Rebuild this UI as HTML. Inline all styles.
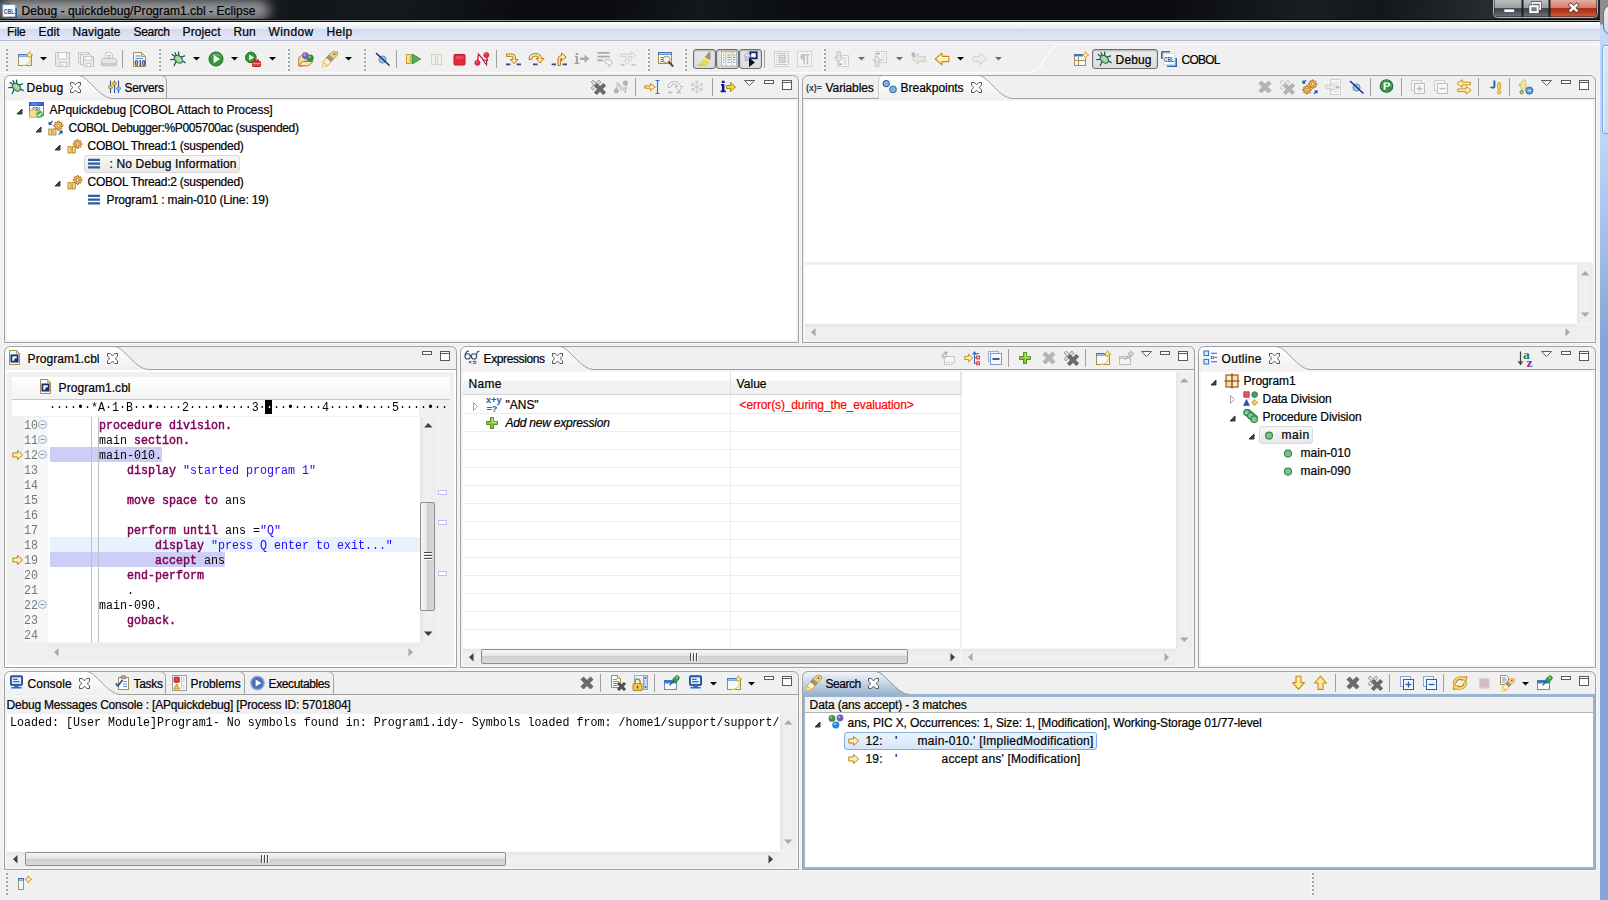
<!DOCTYPE html>
<html lang="en"><head><meta charset="utf-8"><title>Debug - quickdebug/Program1.cbl - Eclipse</title>
<style>
html,body{margin:0;padding:0;background:#f0f0f0;}
#root{position:relative;width:1608px;height:900px;overflow:hidden;background:#f0f0f0;font-family:"Liberation Sans",sans-serif;font-size:12px;color:#000;}
#root div,#root svg,#root span.t{position:absolute;}
#root svg{overflow:visible;}
span.t{white-space:pre;line-height:16px;height:16px;}
span.u{font-family:"Liberation Sans",sans-serif;font-size:12px;-webkit-text-stroke:.2px currentColor;}
span.m{font-family:"Liberation Mono",monospace;font-size:11.667px;transform:scaleY(1.1);transform-origin:0 11px;}
span.k{color:#7f0055;-webkit-text-stroke:.45px #7f0055;}
span.s{color:#2a00ff;}
span.ln{color:#787878;}

</style></head>
<body>
<div id="root">
<div style="left:0px;top:0px;width:1600px;height:22px;background:linear-gradient(100deg,#2c2f33 0px,#121519 300px,#161a1f 380px,#0b0d11 500px,#0a0c10 600px,#14171c 690px,#0a0c10 800px,#0a0c10 1150px,#1a1d21 1290px,#13161a 1360px,#2a2e32 1480px,#1e2125 1600px);"></div>
<div style="left:0px;top:0px;width:270px;height:20px;background:rgba(255,255,255,.55);border-radius:10px;filter:blur(6px);"></div>
<div style="left:0px;top:19px;width:1600px;height:1px;background:#0c1014;"></div>
<div style="left:0px;top:20px;width:1600px;height:1px;background:#9a9e9e;"></div>
<div style="left:0px;top:21px;width:1600px;height:1px;background:#0c1014;"></div>
<div style="left:0px;top:22px;width:1600px;height:7px;background:linear-gradient(180deg,#ffffff,#e5e9f5);"></div>
<div style="left:0px;top:29px;width:1600px;height:11px;background:linear-gradient(180deg,#d4d9ed,#e3e8f8);"></div>
<div style="left:0px;top:40px;width:1600px;height:1px;background:#b6bbd0;"></div>
<div style="left:0px;top:41px;width:1600px;height:1px;background:#f2f2f2;"></div>
<div style="left:1600px;top:0px;width:8px;height:900px;background:linear-gradient(180deg,#8c8c8c 0px,#8c8c8c 24px,#c2d9f8 25px,#bcd6f7 140px,#a6c2ea 230px,#84a5d5 340px,#84a5d5 900px);"></div>
<div style="left:1603px;top:5px;width:16px;height:30px;background:linear-gradient(180deg,#e9edf5,#cfd8ea);border:1px solid #70747c;border-radius:8px;box-sizing:border-box;"></div>
<div style="left:1602px;top:45px;width:12px;height:89px;background:linear-gradient(180deg,#d9e8fb,#c9dcf6);border:1px solid #7fa6d8;border-radius:3px;box-sizing:border-box;box-shadow:inset 1px 1px 0 #f4f9ff;"></div>
<div style="left:1599px;top:42px;width:1px;height:858px;background:#f5f4ef;"></div>
<svg style="left:1493px;top:0px" width="105" height="19" viewBox="0 0 105 19" >
<defs>
<linearGradient id="cbg" x1="0" y1="0" x2="0" y2="1"><stop offset="0" stop-color="#bcbec0"/><stop offset=".48" stop-color="#9c9ea1"/><stop offset=".52" stop-color="#3c4046"/><stop offset="1" stop-color="#6d7177"/></linearGradient>
<linearGradient id="cbr" x1="0" y1="0" x2="0" y2="1"><stop offset="0" stop-color="#e6b0a2"/><stop offset=".48" stop-color="#d27c68"/><stop offset=".52" stop-color="#a82c14"/><stop offset="1" stop-color="#cc5a38"/></linearGradient>
</defs>
<path d="M0.5,-1 V13.5 Q0.5,17.5 4.5,17.5 H100.5 Q104.5,17.5 104.5,13.5 V-1 Z" fill="#1c1f24" stroke="#b0b2b4" stroke-width="1"/>
<path d="M1.5,0 H28.5 V16.5 H4.5 Q1.5,16.5 1.5,13.5 Z" fill="url(#cbg)"/>
<path d="M30.5,0 H55.5 V16.5 H30.5 Z" fill="url(#cbg)"/>
<path d="M57.5,0 H103.5 V13.5 Q103.5,16.5 100.5,16.5 H57.5 Z" fill="url(#cbr)"/>
<rect x="11" y="9" width="10.5" height="3.4" fill="#fff" stroke="#3c4050" stroke-width=".7"/>
<path d="M39.5,5 V2.8 H47.2 V9 H45.5" fill="none" stroke="#3c4050" stroke-width="3"/>
<path d="M39.5,5 V2.8 H47.2 V9 H45.5" fill="none" stroke="#fff" stroke-width="1.8"/>
<rect x="37.3" y="6.2" width="7.4" height="6" fill="none" stroke="#3c4050" stroke-width="3.2"/>
<rect x="37.3" y="6.2" width="7.4" height="6" fill="#7a7d84" stroke="#fff" stroke-width="2"/>
<path d="M77.6,5 L83.6,10.6 M83.6,5 L77.6,10.6" stroke="#4a2a2a" stroke-width="3.8" stroke-linecap="square"/>
<path d="M77.6,5 L83.6,10.6 M83.6,5 L77.6,10.6" stroke="#fff" stroke-width="2.5" stroke-linecap="square"/>
</svg>
<svg style="left:5px;top:48px" width="3" height="24" viewBox="0 0 3 24" ><rect x="0" y="0" width="2" height="2" fill="#fbfbfb"/><rect x="1" y="1" width="2" height="2" fill="#a6a6a6"/><rect x="0" y="4" width="2" height="2" fill="#fbfbfb"/><rect x="1" y="5" width="2" height="2" fill="#a6a6a6"/><rect x="0" y="8" width="2" height="2" fill="#fbfbfb"/><rect x="1" y="9" width="2" height="2" fill="#a6a6a6"/><rect x="0" y="12" width="2" height="2" fill="#fbfbfb"/><rect x="1" y="13" width="2" height="2" fill="#a6a6a6"/><rect x="0" y="16" width="2" height="2" fill="#fbfbfb"/><rect x="1" y="17" width="2" height="2" fill="#a6a6a6"/><rect x="0" y="20" width="2" height="2" fill="#fbfbfb"/><rect x="1" y="21" width="2" height="2" fill="#a6a6a6"/></svg>
<svg style="left:158px;top:48px" width="3" height="24" viewBox="0 0 3 24" ><rect x="0" y="0" width="2" height="2" fill="#fbfbfb"/><rect x="1" y="1" width="2" height="2" fill="#a6a6a6"/><rect x="0" y="4" width="2" height="2" fill="#fbfbfb"/><rect x="1" y="5" width="2" height="2" fill="#a6a6a6"/><rect x="0" y="8" width="2" height="2" fill="#fbfbfb"/><rect x="1" y="9" width="2" height="2" fill="#a6a6a6"/><rect x="0" y="12" width="2" height="2" fill="#fbfbfb"/><rect x="1" y="13" width="2" height="2" fill="#a6a6a6"/><rect x="0" y="16" width="2" height="2" fill="#fbfbfb"/><rect x="1" y="17" width="2" height="2" fill="#a6a6a6"/><rect x="0" y="20" width="2" height="2" fill="#fbfbfb"/><rect x="1" y="21" width="2" height="2" fill="#a6a6a6"/></svg>
<svg style="left:287px;top:48px" width="3" height="24" viewBox="0 0 3 24" ><rect x="0" y="0" width="2" height="2" fill="#fbfbfb"/><rect x="1" y="1" width="2" height="2" fill="#a6a6a6"/><rect x="0" y="4" width="2" height="2" fill="#fbfbfb"/><rect x="1" y="5" width="2" height="2" fill="#a6a6a6"/><rect x="0" y="8" width="2" height="2" fill="#fbfbfb"/><rect x="1" y="9" width="2" height="2" fill="#a6a6a6"/><rect x="0" y="12" width="2" height="2" fill="#fbfbfb"/><rect x="1" y="13" width="2" height="2" fill="#a6a6a6"/><rect x="0" y="16" width="2" height="2" fill="#fbfbfb"/><rect x="1" y="17" width="2" height="2" fill="#a6a6a6"/><rect x="0" y="20" width="2" height="2" fill="#fbfbfb"/><rect x="1" y="21" width="2" height="2" fill="#a6a6a6"/></svg>
<svg style="left:363px;top:48px" width="3" height="24" viewBox="0 0 3 24" ><rect x="0" y="0" width="2" height="2" fill="#fbfbfb"/><rect x="1" y="1" width="2" height="2" fill="#a6a6a6"/><rect x="0" y="4" width="2" height="2" fill="#fbfbfb"/><rect x="1" y="5" width="2" height="2" fill="#a6a6a6"/><rect x="0" y="8" width="2" height="2" fill="#fbfbfb"/><rect x="1" y="9" width="2" height="2" fill="#a6a6a6"/><rect x="0" y="12" width="2" height="2" fill="#fbfbfb"/><rect x="1" y="13" width="2" height="2" fill="#a6a6a6"/><rect x="0" y="16" width="2" height="2" fill="#fbfbfb"/><rect x="1" y="17" width="2" height="2" fill="#a6a6a6"/><rect x="0" y="20" width="2" height="2" fill="#fbfbfb"/><rect x="1" y="21" width="2" height="2" fill="#a6a6a6"/></svg>
<svg style="left:647px;top:48px" width="3" height="24" viewBox="0 0 3 24" ><rect x="0" y="0" width="2" height="2" fill="#fbfbfb"/><rect x="1" y="1" width="2" height="2" fill="#a6a6a6"/><rect x="0" y="4" width="2" height="2" fill="#fbfbfb"/><rect x="1" y="5" width="2" height="2" fill="#a6a6a6"/><rect x="0" y="8" width="2" height="2" fill="#fbfbfb"/><rect x="1" y="9" width="2" height="2" fill="#a6a6a6"/><rect x="0" y="12" width="2" height="2" fill="#fbfbfb"/><rect x="1" y="13" width="2" height="2" fill="#a6a6a6"/><rect x="0" y="16" width="2" height="2" fill="#fbfbfb"/><rect x="1" y="17" width="2" height="2" fill="#a6a6a6"/><rect x="0" y="20" width="2" height="2" fill="#fbfbfb"/><rect x="1" y="21" width="2" height="2" fill="#a6a6a6"/></svg>
<svg style="left:684px;top:48px" width="3" height="24" viewBox="0 0 3 24" ><rect x="0" y="0" width="2" height="2" fill="#fbfbfb"/><rect x="1" y="1" width="2" height="2" fill="#a6a6a6"/><rect x="0" y="4" width="2" height="2" fill="#fbfbfb"/><rect x="1" y="5" width="2" height="2" fill="#a6a6a6"/><rect x="0" y="8" width="2" height="2" fill="#fbfbfb"/><rect x="1" y="9" width="2" height="2" fill="#a6a6a6"/><rect x="0" y="12" width="2" height="2" fill="#fbfbfb"/><rect x="1" y="13" width="2" height="2" fill="#a6a6a6"/><rect x="0" y="16" width="2" height="2" fill="#fbfbfb"/><rect x="1" y="17" width="2" height="2" fill="#a6a6a6"/><rect x="0" y="20" width="2" height="2" fill="#fbfbfb"/><rect x="1" y="21" width="2" height="2" fill="#a6a6a6"/></svg>
<svg style="left:823px;top:48px" width="3" height="24" viewBox="0 0 3 24" ><rect x="0" y="0" width="2" height="2" fill="#fbfbfb"/><rect x="1" y="1" width="2" height="2" fill="#a6a6a6"/><rect x="0" y="4" width="2" height="2" fill="#fbfbfb"/><rect x="1" y="5" width="2" height="2" fill="#a6a6a6"/><rect x="0" y="8" width="2" height="2" fill="#fbfbfb"/><rect x="1" y="9" width="2" height="2" fill="#a6a6a6"/><rect x="0" y="12" width="2" height="2" fill="#fbfbfb"/><rect x="1" y="13" width="2" height="2" fill="#a6a6a6"/><rect x="0" y="16" width="2" height="2" fill="#fbfbfb"/><rect x="1" y="17" width="2" height="2" fill="#a6a6a6"/><rect x="0" y="20" width="2" height="2" fill="#fbfbfb"/><rect x="1" y="21" width="2" height="2" fill="#a6a6a6"/></svg>
<div style="left:122px;top:50px;width:1px;height:18px;background:#a0a0a0;"></div>
<div style="left:396px;top:50px;width:1px;height:18px;background:#a0a0a0;"></div>
<div style="left:496px;top:50px;width:1px;height:18px;background:#a0a0a0;"></div>
<div style="left:764px;top:50px;width:1px;height:18px;background:#a0a0a0;"></div>
<svg style="left:40px;top:57px" width="7" height="4" viewBox="0 0 7 4" ><path d="M0,0 H7 L3.5,3.5 Z" fill="#000"/></svg>
<svg style="left:193px;top:57px" width="7" height="4" viewBox="0 0 7 4" ><path d="M0,0 H7 L3.5,3.5 Z" fill="#000"/></svg>
<svg style="left:231px;top:57px" width="7" height="4" viewBox="0 0 7 4" ><path d="M0,0 H7 L3.5,3.5 Z" fill="#000"/></svg>
<svg style="left:269px;top:57px" width="7" height="4" viewBox="0 0 7 4" ><path d="M0,0 H7 L3.5,3.5 Z" fill="#000"/></svg>
<svg style="left:345px;top:57px" width="7" height="4" viewBox="0 0 7 4" ><path d="M0,0 H7 L3.5,3.5 Z" fill="#000"/></svg>
<svg style="left:858px;top:57px" width="7" height="4" viewBox="0 0 7 4" ><path d="M0,0 H7 L3.5,3.5 Z" fill="#6e6e6e"/></svg>
<svg style="left:896px;top:57px" width="7" height="4" viewBox="0 0 7 4" ><path d="M0,0 H7 L3.5,3.5 Z" fill="#6e6e6e"/></svg>
<svg style="left:995px;top:57px" width="7" height="4" viewBox="0 0 7 4" ><path d="M0,0 H7 L3.5,3.5 Z" fill="#6e6e6e"/></svg>
<svg style="left:957px;top:57px" width="7" height="4" viewBox="0 0 7 4" ><path d="M0,0 H7 L3.5,3.5 Z" fill="#000"/></svg>
<div style="left:693px;top:49px;width:23px;height:20px;background:linear-gradient(180deg,#e9e9e9,#dcdcdc);border:1px solid #6e6e6e;border-radius:3px;box-sizing:border-box;box-shadow:inset 0 1px 2px rgba(0,0,0,.25);"></div>
<div style="left:716px;top:49px;width:23px;height:20px;background:linear-gradient(180deg,#e9e9e9,#dcdcdc);border:1px solid #6e6e6e;border-radius:3px;box-sizing:border-box;box-shadow:inset 0 1px 2px rgba(0,0,0,.25);"></div>
<div style="left:739px;top:49px;width:23px;height:20px;background:linear-gradient(180deg,#e9e9e9,#dcdcdc);border:1px solid #6e6e6e;border-radius:3px;box-sizing:border-box;box-shadow:inset 0 1px 2px rgba(0,0,0,.25);"></div>
<svg style="left:0px;top:42px" width="1600" height="32" viewBox="0 0 1600 32" ><path d="M0,30.5 H1028 C1046,30.5 1045,2.5 1063,2.5 H1600" fill="none" stroke="#ffffff" stroke-width="1.1"/></svg>
<div style="left:1092px;top:49px;width:66px;height:20px;background:linear-gradient(180deg,#ececec,#dedede);border:1px solid #6e6e6e;border-radius:3px;box-sizing:border-box;box-shadow:inset 0 1px 2px rgba(0,0,0,.25);"></div>
<svg style="left:4px;top:75px" width="795" height="268" viewBox="0 0 795 268" ><defs><linearGradient id="g4_75" x1="0" y1="0" x2="0" y2="1"><stop offset="0" stop-color="#ffffff"/><stop offset="1" stop-color="#f0f0f0"/></linearGradient></defs><path d="M0.5,267.5 V6.5 Q0.5,0.5 6.5,0.5 H788.5 Q794.5,0.5 794.5,6.5 V267.5 Z" fill="none" stroke="#f7f7f7" stroke-width="3"/><path d="M0.5,267.5 V6.5 Q0.5,0.5 6.5,0.5 H788.5 Q794.5,0.5 794.5,6.5 V267.5 Z" fill="#f0f0f0" stroke="none"/><rect x="1" y="24" width="793" height="243" fill="#f4f4f4"/><path d="M0.5,23.5 V6.5 Q0.5,0.5 6.5,0.5 H75 C83.2,0.5 96.1,23.5 108,23.5 Z" fill="url(#g4_75)" stroke="none"/><path d="M75,0.5 C83.2,0.5 96.1,23.5 108,23.5 H794.5" fill="none" stroke="#a0a0a0" stroke-width="1"/><path d="M156.5,0.5 Q162.5,0.5 162.5,6.5 V23" fill="none" stroke="#a0a0a0" stroke-width="1"/><path d="M0.5,267.5 V6.5 Q0.5,0.5 6.5,0.5 H788.5 Q794.5,0.5 794.5,6.5 V267.5 Z" fill="none" stroke="#a0a0a0" stroke-width="1"/></svg>
<div style="left:7px;top:101px;width:789px;height:239px;background:#ffffff;"></div>
<svg style="left:70px;top:82px" width="11" height="11" viewBox="0 0 11 11" ><path d="M0.5,0.5 H3.2 L5.5,2.9 L7.8,0.5 H10.5 V3.2 L8.1,5.5 L10.5,7.8 V10.5 H7.8 L5.5,8.1 L3.2,10.5 H0.5 V7.8 L2.9,5.5 L0.5,3.2 Z" fill="#fff" stroke="#555" stroke-width="1" stroke-linejoin="round"/></svg>
<div style="left:635px;top:78px;width:1px;height:18px;background:#a0a0a0;"></div>
<div style="left:712px;top:78px;width:1px;height:18px;background:#a0a0a0;"></div>
<svg style="left:744px;top:80px" width="12" height="8" viewBox="0 0 12 8" ><path d="M0.5,0.5 H10.5 L5.5,5.5 Z" fill="#fff" stroke="#5a5a5a" stroke-width="1"/></svg>
<svg style="left:764px;top:80px" width="10" height="5" viewBox="0 0 10 5" ><rect x="0.5" y="0.5" width="9" height="3" fill="#fff" stroke="#5a5a5a" stroke-width="1"/></svg>
<svg style="left:782px;top:80px" width="11" height="11" viewBox="0 0 11 11" ><rect x="0.5" y="0.5" width="9" height="9" fill="#fff" stroke="#5a5a5a" stroke-width="1"/><path d="M0.5,2.5 H9.5" stroke="#5a5a5a" stroke-width="1"/></svg>
<div style="left:84px;top:155px;width:156px;height:18px;background:linear-gradient(180deg,#f8f8f8,#e8e8e8);border:1px solid #d9d9d9;border-radius:3px;box-sizing:border-box;"></div>
<svg style="left:16px;top:108px" width="7" height="7" viewBox="0 0 7 7" ><path d="M6,1 V6 H1 Z" fill="#484848" stroke="#262626" stroke-width=".9" stroke-linejoin="round"/></svg>
<svg style="left:35px;top:126px" width="7" height="7" viewBox="0 0 7 7" ><path d="M6,1 V6 H1 Z" fill="#484848" stroke="#262626" stroke-width=".9" stroke-linejoin="round"/></svg>
<svg style="left:54px;top:144px" width="7" height="7" viewBox="0 0 7 7" ><path d="M6,1 V6 H1 Z" fill="#484848" stroke="#262626" stroke-width=".9" stroke-linejoin="round"/></svg>
<svg style="left:54px;top:180px" width="7" height="7" viewBox="0 0 7 7" ><path d="M6,1 V6 H1 Z" fill="#484848" stroke="#262626" stroke-width=".9" stroke-linejoin="round"/></svg>
<svg style="left:802px;top:75px" width="794" height="268" viewBox="0 0 794 268" ><defs><linearGradient id="g802_75" x1="0" y1="0" x2="0" y2="1"><stop offset="0" stop-color="#ffffff"/><stop offset="1" stop-color="#f0f0f0"/></linearGradient></defs><path d="M0.5,267.5 V6.5 Q0.5,0.5 6.5,0.5 H787.5 Q793.5,0.5 793.5,6.5 V267.5 Z" fill="none" stroke="#f7f7f7" stroke-width="3"/><path d="M0.5,267.5 V6.5 Q0.5,0.5 6.5,0.5 H787.5 Q793.5,0.5 793.5,6.5 V267.5 Z" fill="#f0f0f0" stroke="none"/><rect x="1" y="24" width="792" height="243" fill="#f4f4f4"/><path d="M0.5,23.5 H76.5 V6.5 Q76.5,0.5 82.5,0.5" fill="none" stroke="#a0a0a0" stroke-width="1"/><path d="M76.5,23.5 V6.5 Q76.5,0.5 82.5,0.5 H177 C185.2,0.5 198.1,23.5 210,23.5 Z" fill="url(#g802_75)" stroke="none"/><path d="M177,0.5 C185.2,0.5 198.1,23.5 210,23.5 H793.5" fill="none" stroke="#a0a0a0" stroke-width="1"/><path d="M0.5,267.5 V6.5 Q0.5,0.5 6.5,0.5 H787.5 Q793.5,0.5 793.5,6.5 V267.5 Z" fill="none" stroke="#a0a0a0" stroke-width="1"/></svg>
<div style="left:805px;top:101px;width:788px;height:239px;background:#ffffff;"></div>
<svg style="left:971px;top:82px" width="11" height="11" viewBox="0 0 11 11" ><path d="M0.5,0.5 H3.2 L5.5,2.9 L7.8,0.5 H10.5 V3.2 L8.1,5.5 L10.5,7.8 V10.5 H7.8 L5.5,8.1 L3.2,10.5 H0.5 V7.8 L2.9,5.5 L0.5,3.2 Z" fill="#fff" stroke="#555" stroke-width="1" stroke-linejoin="round"/></svg>
<div style="left:1370px;top:78px;width:1px;height:18px;background:#a0a0a0;"></div>
<div style="left:1401px;top:78px;width:1px;height:18px;background:#a0a0a0;"></div>
<div style="left:1478px;top:78px;width:1px;height:18px;background:#a0a0a0;"></div>
<div style="left:1509px;top:78px;width:1px;height:18px;background:#a0a0a0;"></div>
<svg style="left:1541px;top:80px" width="12" height="8" viewBox="0 0 12 8" ><path d="M0.5,0.5 H10.5 L5.5,5.5 Z" fill="#fff" stroke="#5a5a5a" stroke-width="1"/></svg>
<svg style="left:1561px;top:80px" width="10" height="5" viewBox="0 0 10 5" ><rect x="0.5" y="0.5" width="9" height="3" fill="#fff" stroke="#5a5a5a" stroke-width="1"/></svg>
<svg style="left:1579px;top:80px" width="11" height="11" viewBox="0 0 11 11" ><rect x="0.5" y="0.5" width="9" height="9" fill="#fff" stroke="#5a5a5a" stroke-width="1"/><path d="M0.5,2.5 H9.5" stroke="#5a5a5a" stroke-width="1"/></svg>
<div style="left:805px;top:262px;width:788px;height:3px;background:#f0f0f0;"></div>
<div style="left:1577px;top:265px;width:16px;height:58px;background:linear-gradient(90deg,#e6e6e6,#eeeeee 25%,#f0f0f0 60%,#ececec);"></div>
<svg style="left:1581px;top:271px" width="9" height="5" viewBox="0 0 9 5" ><path d="M0,4.5 H8.5 L4.25,0 Z" fill="#a8a8a8"/></svg>
<svg style="left:1581px;top:312px" width="9" height="5" viewBox="0 0 9 5" ><path d="M0,0.5 H8.5 L4.25,5 Z" fill="#a8a8a8"/></svg>
<div style="left:805px;top:324px;width:771px;height:16px;background:linear-gradient(180deg,#e6e6e6,#eeeeee 25%,#f0f0f0 60%,#ececec);"></div>
<svg style="left:811px;top:328px" width="5" height="9" viewBox="0 0 5 9" ><path d="M4.5,0 V8.5 L0,4.25 Z" fill="#a8a8a8"/></svg>
<svg style="left:1565px;top:328px" width="5" height="9" viewBox="0 0 5 9" ><path d="M0.5,0 V8.5 L5,4.25 Z" fill="#a8a8a8"/></svg>
<div style="left:805px;top:323px;width:788px;height:1px;background:#f6f6f6;"></div>
<div style="left:1576px;top:324px;width:17px;height:16px;background:#f0f0f0;"></div>
<svg style="left:4px;top:346px" width="453" height="322" viewBox="0 0 453 322" ><defs><linearGradient id="g4_346" x1="0" y1="0" x2="0" y2="1"><stop offset="0" stop-color="#ffffff"/><stop offset="1" stop-color="#f0f0f0"/></linearGradient></defs><path d="M0.5,321.5 V6.5 Q0.5,0.5 6.5,0.5 H446.5 Q452.5,0.5 452.5,6.5 V321.5 Z" fill="none" stroke="#f7f7f7" stroke-width="3"/><path d="M0.5,321.5 V6.5 Q0.5,0.5 6.5,0.5 H446.5 Q452.5,0.5 452.5,6.5 V321.5 Z" fill="#f0f0f0" stroke="none"/><rect x="1" y="24" width="451" height="297" fill="#ffffff"/><path d="M0.5,23.5 V6.5 Q0.5,0.5 6.5,0.5 H111 C119.2,0.5 132.1,23.5 144,23.5 Z" fill="url(#g4_346)" stroke="none"/><path d="M111,0.5 C119.2,0.5 132.1,23.5 144,23.5 H452.5" fill="none" stroke="#a0a0a0" stroke-width="1"/><path d="M0.5,321.5 V6.5 Q0.5,0.5 6.5,0.5 H446.5 Q452.5,0.5 452.5,6.5 V321.5 Z" fill="none" stroke="#a0a0a0" stroke-width="1"/></svg>
<div style="left:7px;top:372px;width:447px;height:293px;background:#f0f0f0;"></div>
<svg style="left:107px;top:353px" width="11" height="11" viewBox="0 0 11 11" ><path d="M0.5,0.5 H3.2 L5.5,2.9 L7.8,0.5 H10.5 V3.2 L8.1,5.5 L10.5,7.8 V10.5 H7.8 L5.5,8.1 L3.2,10.5 H0.5 V7.8 L2.9,5.5 L0.5,3.2 Z" fill="#fff" stroke="#555" stroke-width="1" stroke-linejoin="round"/></svg>
<svg style="left:422px;top:351px" width="10" height="5" viewBox="0 0 10 5" ><rect x="0.5" y="0.5" width="9" height="3" fill="#fff" stroke="#5a5a5a" stroke-width="1"/></svg>
<svg style="left:440px;top:351px" width="11" height="11" viewBox="0 0 11 11" ><rect x="0.5" y="0.5" width="9" height="9" fill="#fff" stroke="#5a5a5a" stroke-width="1"/><path d="M0.5,2.5 H9.5" stroke="#5a5a5a" stroke-width="1"/></svg>
<div style="left:12px;top:377px;width:438px;height:22px;background:linear-gradient(180deg,#ffffff,#f3f3f3);"></div>
<div style="left:12px;top:399px;width:438px;height:1px;background:#c8c8c8;"></div>
<div style="left:12px;top:400px;width:407px;height:16px;background:#ffffff;"></div>
<div style="left:265px;top:400px;width:7px;height:14px;background:#000;"></div>
<div style="left:24px;top:417px;width:24px;height:225px;background:#f7f7f7;"></div>
<div style="left:48px;top:417px;width:372px;height:225px;background:#ffffff;"></div>
<div style="left:50px;top:447px;width:112px;height:15px;background:#cecdf7;"></div>
<div style="left:50px;top:537px;width:370px;height:15px;background:#e8f2fe;"></div>
<div style="left:50px;top:552px;width:175px;height:15px;background:#cecdf7;"></div>
<div style="left:91px;top:417px;width:1px;height:225px;background:#c0c0c0;"></div>
<div style="left:98px;top:417px;width:1px;height:225px;background:#c0c0c0;"></div>
<svg style="left:38px;top:420px" width="9" height="9" viewBox="0 0 9 9" ><circle cx="4.5" cy="4.5" r="4" fill="#eef3f8" stroke="#9fb3c8" stroke-width="1"/><path d="M2.5,4.5 H6.5" stroke="#7f95ad" stroke-width="1"/></svg>
<svg style="left:38px;top:435px" width="9" height="9" viewBox="0 0 9 9" ><circle cx="4.5" cy="4.5" r="4" fill="#eef3f8" stroke="#9fb3c8" stroke-width="1"/><path d="M2.5,4.5 H6.5" stroke="#7f95ad" stroke-width="1"/></svg>
<svg style="left:12px;top:447px" width="16" height="16" viewBox="0 0 16 16"><path d="M0.8,6 H5.6 V3.4 L10.6,8 L5.6,12.6 V10 H0.8 Z" fill="#fdeeb4" stroke="#b98512" stroke-width="1" stroke-linejoin="round"/></svg>
<svg style="left:38px;top:450px" width="9" height="9" viewBox="0 0 9 9" ><circle cx="4.5" cy="4.5" r="4" fill="#eef3f8" stroke="#9fb3c8" stroke-width="1"/><path d="M2.5,4.5 H6.5" stroke="#7f95ad" stroke-width="1"/></svg>
<svg style="left:12px;top:552px" width="16" height="16" viewBox="0 0 16 16"><path d="M0.8,6 H5.6 V3.4 L10.6,8 L5.6,12.6 V10 H0.8 Z" fill="#fdeeb4" stroke="#b98512" stroke-width="1" stroke-linejoin="round"/></svg>
<svg style="left:38px;top:600px" width="9" height="9" viewBox="0 0 9 9" ><circle cx="4.5" cy="4.5" r="4" fill="#eef3f8" stroke="#9fb3c8" stroke-width="1"/><path d="M2.5,4.5 H6.5" stroke="#7f95ad" stroke-width="1"/></svg>
<div style="left:420px;top:417px;width:16px;height:225px;background:linear-gradient(90deg,#e6e6e6,#eeeeee 25%,#f0f0f0 60%,#ececec);"></div>
<svg style="left:424px;top:423px" width="9" height="5" viewBox="0 0 9 5" ><path d="M0,4.5 H8.5 L4.25,0 Z" fill="#3c3c3c"/></svg>
<svg style="left:424px;top:631px" width="9" height="5" viewBox="0 0 9 5" ><path d="M0,0.5 H8.5 L4.25,5 Z" fill="#3c3c3c"/></svg>
<div style="left:420px;top:502px;width:15px;height:109px;background:linear-gradient(90deg,#f6f6f6 0%,#e6e6e8 45%,#cfcfd2 50%,#dadadc 100%);border:1px solid #8e8e8e;border-radius:2px;box-sizing:border-box;"></div>
<div style="left:424px;top:552px;width:8px;height:1px;background:#4a4a4a;"></div>
<div style="left:424px;top:553px;width:8px;height:1px;background:#fdfdfd;"></div>
<div style="left:424px;top:555px;width:8px;height:1px;background:#4a4a4a;"></div>
<div style="left:424px;top:556px;width:8px;height:1px;background:#fdfdfd;"></div>
<div style="left:424px;top:558px;width:8px;height:1px;background:#4a4a4a;"></div>
<div style="left:424px;top:559px;width:8px;height:1px;background:#fdfdfd;"></div>
<div style="left:438px;top:490px;width:9px;height:5px;background:#fff;border:1px solid #c4c0f2;box-sizing:border-box;"></div>
<div style="left:438px;top:520px;width:9px;height:5px;background:#fff;border:1px solid #c4c0f2;box-sizing:border-box;"></div>
<div style="left:438px;top:571px;width:9px;height:5px;background:#fff;border:1px solid #c4c0f2;box-sizing:border-box;"></div>
<div style="left:48px;top:644px;width:371px;height:16px;background:linear-gradient(180deg,#e6e6e6,#eeeeee 25%,#f0f0f0 60%,#ececec);"></div>
<svg style="left:54px;top:648px" width="5" height="9" viewBox="0 0 5 9" ><path d="M4.5,0 V8.5 L0,4.25 Z" fill="#a8a8a8"/></svg>
<svg style="left:408px;top:648px" width="5" height="9" viewBox="0 0 5 9" ><path d="M0.5,0 V8.5 L5,4.25 Z" fill="#a8a8a8"/></svg>
<svg style="left:460px;top:346px" width="735" height="322" viewBox="0 0 735 322" ><defs><linearGradient id="g460_346" x1="0" y1="0" x2="0" y2="1"><stop offset="0" stop-color="#ffffff"/><stop offset="1" stop-color="#f0f0f0"/></linearGradient></defs><path d="M0.5,321.5 V6.5 Q0.5,0.5 6.5,0.5 H728.5 Q734.5,0.5 734.5,6.5 V321.5 Z" fill="none" stroke="#f7f7f7" stroke-width="3"/><path d="M0.5,321.5 V6.5 Q0.5,0.5 6.5,0.5 H728.5 Q734.5,0.5 734.5,6.5 V321.5 Z" fill="#f0f0f0" stroke="none"/><rect x="1" y="24" width="733" height="297" fill="#f4f4f4"/><path d="M0.5,23.5 V6.5 Q0.5,0.5 6.5,0.5 H100 C108.2,0.5 121.1,23.5 133,23.5 Z" fill="url(#g460_346)" stroke="none"/><path d="M100,0.5 C108.2,0.5 121.1,23.5 133,23.5 H734.5" fill="none" stroke="#a0a0a0" stroke-width="1"/><path d="M0.5,321.5 V6.5 Q0.5,0.5 6.5,0.5 H728.5 Q734.5,0.5 734.5,6.5 V321.5 Z" fill="none" stroke="#a0a0a0" stroke-width="1"/></svg>
<div style="left:463px;top:372px;width:729px;height:293px;background:#ffffff;"></div>
<svg style="left:552px;top:353px" width="11" height="11" viewBox="0 0 11 11" ><path d="M0.5,0.5 H3.2 L5.5,2.9 L7.8,0.5 H10.5 V3.2 L8.1,5.5 L10.5,7.8 V10.5 H7.8 L5.5,8.1 L3.2,10.5 H0.5 V7.8 L2.9,5.5 L0.5,3.2 Z" fill="#fff" stroke="#555" stroke-width="1" stroke-linejoin="round"/></svg>
<div style="left:1008px;top:349px;width:1px;height:18px;background:#a0a0a0;"></div>
<div style="left:1085px;top:349px;width:1px;height:18px;background:#a0a0a0;"></div>
<svg style="left:1141px;top:351px" width="12" height="8" viewBox="0 0 12 8" ><path d="M0.5,0.5 H10.5 L5.5,5.5 Z" fill="#fff" stroke="#5a5a5a" stroke-width="1"/></svg>
<svg style="left:1160px;top:351px" width="10" height="5" viewBox="0 0 10 5" ><rect x="0.5" y="0.5" width="9" height="3" fill="#fff" stroke="#5a5a5a" stroke-width="1"/></svg>
<svg style="left:1178px;top:351px" width="11" height="11" viewBox="0 0 11 11" ><rect x="0.5" y="0.5" width="9" height="9" fill="#fff" stroke="#5a5a5a" stroke-width="1"/><path d="M0.5,2.5 H9.5" stroke="#5a5a5a" stroke-width="1"/></svg>
<div style="left:463px;top:372px;width:498px;height:22px;background:linear-gradient(180deg,#ffffff 0,#ffffff 8px,#f3f4f5 9px,#eff0f2 22px);"></div>
<div style="left:463px;top:394px;width:498px;height:1px;background:#d5d5d5;"></div>
<div style="left:730px;top:372px;width:1px;height:22px;background:#e0e0e0;"></div>
<div style="left:960px;top:372px;width:2px;height:22px;background:#e4e4e4;"></div>
<div style="left:463px;top:413px;width:498px;height:1px;background:#ececec;"></div>
<div style="left:463px;top:431px;width:498px;height:1px;background:#ececec;"></div>
<div style="left:463px;top:449px;width:498px;height:1px;background:#ececec;"></div>
<div style="left:463px;top:467px;width:498px;height:1px;background:#ececec;"></div>
<div style="left:463px;top:485px;width:498px;height:1px;background:#ececec;"></div>
<div style="left:463px;top:503px;width:498px;height:1px;background:#ececec;"></div>
<div style="left:463px;top:521px;width:498px;height:1px;background:#ececec;"></div>
<div style="left:463px;top:539px;width:498px;height:1px;background:#ececec;"></div>
<div style="left:463px;top:557px;width:498px;height:1px;background:#ececec;"></div>
<div style="left:463px;top:575px;width:498px;height:1px;background:#ececec;"></div>
<div style="left:463px;top:593px;width:498px;height:1px;background:#ececec;"></div>
<div style="left:463px;top:611px;width:498px;height:1px;background:#ececec;"></div>
<div style="left:463px;top:629px;width:498px;height:1px;background:#ececec;"></div>
<div style="left:730px;top:395px;width:1px;height:252px;background:#ececec;"></div>
<div style="left:960px;top:395px;width:2px;height:252px;background:#efefef;"></div>
<svg style="left:473px;top:402px" width="6" height="10" viewBox="0 0 6 10" ><path d="M0.5,0.5 L4.5,4.5 L0.5,8.5 Z" fill="#fff" stroke="#a6a6a6" stroke-width="1" stroke-linejoin="round"/></svg>
<div style="left:1176px;top:372px;width:16px;height:276px;background:linear-gradient(90deg,#e6e6e6,#eeeeee 25%,#f0f0f0 60%,#ececec);"></div>
<svg style="left:1180px;top:378px" width="9" height="5" viewBox="0 0 9 5" ><path d="M0,4.5 H8.5 L4.25,0 Z" fill="#a8a8a8"/></svg>
<svg style="left:1180px;top:637px" width="9" height="5" viewBox="0 0 9 5" ><path d="M0,0.5 H8.5 L4.25,5 Z" fill="#a8a8a8"/></svg>
<div style="left:463px;top:648px;width:729px;height:1px;background:#f6f6f6;"></div>
<div style="left:463px;top:649px;width:498px;height:16px;background:linear-gradient(180deg,#e6e6e6,#eeeeee 25%,#f0f0f0 60%,#ececec);"></div>
<svg style="left:469px;top:653px" width="5" height="9" viewBox="0 0 5 9" ><path d="M4.5,0 V8.5 L0,4.25 Z" fill="#404040"/></svg>
<svg style="left:950px;top:653px" width="5" height="9" viewBox="0 0 5 9" ><path d="M0.5,0 V8.5 L5,4.25 Z" fill="#404040"/></svg>
<div style="left:481px;top:649px;width:427px;height:15px;background:linear-gradient(180deg,#f6f6f6 0%,#e6e6e8 45%,#cfcfd2 50%,#dadadc 100%);border:1px solid #8e8e8e;border-radius:2px;box-sizing:border-box;"></div>
<div style="left:690px;top:653px;width:1px;height:8px;background:#4a4a4a;"></div>
<div style="left:691px;top:653px;width:1px;height:8px;background:#fdfdfd;"></div>
<div style="left:693px;top:653px;width:1px;height:8px;background:#4a4a4a;"></div>
<div style="left:694px;top:653px;width:1px;height:8px;background:#fdfdfd;"></div>
<div style="left:696px;top:653px;width:1px;height:8px;background:#4a4a4a;"></div>
<div style="left:697px;top:653px;width:1px;height:8px;background:#fdfdfd;"></div>
<div style="left:962px;top:649px;width:213px;height:16px;background:linear-gradient(180deg,#e6e6e6,#eeeeee 25%,#f0f0f0 60%,#ececec);"></div>
<svg style="left:968px;top:653px" width="5" height="9" viewBox="0 0 5 9" ><path d="M4.5,0 V8.5 L0,4.25 Z" fill="#a8a8a8"/></svg>
<svg style="left:1164px;top:653px" width="5" height="9" viewBox="0 0 5 9" ><path d="M0.5,0 V8.5 L5,4.25 Z" fill="#a8a8a8"/></svg>
<div style="left:961px;top:649px;width:1px;height:16px;background:#fafafa;"></div>
<div style="left:1175px;top:648px;width:17px;height:17px;background:#f0f0f0;"></div>
<svg style="left:1198px;top:346px" width="398" height="322" viewBox="0 0 398 322" ><defs><linearGradient id="g1198_346" x1="0" y1="0" x2="0" y2="1"><stop offset="0" stop-color="#ffffff"/><stop offset="1" stop-color="#f0f0f0"/></linearGradient></defs><path d="M0.5,321.5 V6.5 Q0.5,0.5 6.5,0.5 H391.5 Q397.5,0.5 397.5,6.5 V321.5 Z" fill="none" stroke="#f7f7f7" stroke-width="3"/><path d="M0.5,321.5 V6.5 Q0.5,0.5 6.5,0.5 H391.5 Q397.5,0.5 397.5,6.5 V321.5 Z" fill="#f0f0f0" stroke="none"/><rect x="1" y="24" width="396" height="297" fill="#f4f4f4"/><path d="M0.5,23.5 V6.5 Q0.5,0.5 6.5,0.5 H79 C87.2,0.5 100.1,23.5 112,23.5 Z" fill="url(#g1198_346)" stroke="none"/><path d="M79,0.5 C87.2,0.5 100.1,23.5 112,23.5 H397.5" fill="none" stroke="#a0a0a0" stroke-width="1"/><path d="M0.5,321.5 V6.5 Q0.5,0.5 6.5,0.5 H391.5 Q397.5,0.5 397.5,6.5 V321.5 Z" fill="none" stroke="#a0a0a0" stroke-width="1"/></svg>
<div style="left:1201px;top:372px;width:392px;height:293px;background:#ffffff;"></div>
<svg style="left:1269px;top:353px" width="11" height="11" viewBox="0 0 11 11" ><path d="M0.5,0.5 H3.2 L5.5,2.9 L7.8,0.5 H10.5 V3.2 L8.1,5.5 L10.5,7.8 V10.5 H7.8 L5.5,8.1 L3.2,10.5 H0.5 V7.8 L2.9,5.5 L0.5,3.2 Z" fill="#fff" stroke="#555" stroke-width="1" stroke-linejoin="round"/></svg>
<svg style="left:1541px;top:351px" width="12" height="8" viewBox="0 0 12 8" ><path d="M0.5,0.5 H10.5 L5.5,5.5 Z" fill="#fff" stroke="#5a5a5a" stroke-width="1"/></svg>
<svg style="left:1561px;top:351px" width="10" height="5" viewBox="0 0 10 5" ><rect x="0.5" y="0.5" width="9" height="3" fill="#fff" stroke="#5a5a5a" stroke-width="1"/></svg>
<svg style="left:1579px;top:351px" width="11" height="11" viewBox="0 0 11 11" ><rect x="0.5" y="0.5" width="9" height="9" fill="#fff" stroke="#5a5a5a" stroke-width="1"/><path d="M0.5,2.5 H9.5" stroke="#5a5a5a" stroke-width="1"/></svg>
<div style="left:1259px;top:426px;width:54px;height:18px;background:linear-gradient(180deg,#f8f8f8,#e8e8e8);border:1px solid #d9d9d9;border-radius:3px;box-sizing:border-box;"></div>
<svg style="left:1210px;top:379px" width="7" height="7" viewBox="0 0 7 7" ><path d="M6,1 V6 H1 Z" fill="#484848" stroke="#262626" stroke-width=".9" stroke-linejoin="round"/></svg>
<svg style="left:1230px;top:395px" width="6" height="10" viewBox="0 0 6 10" ><path d="M0.5,0.5 L4.5,4.5 L0.5,8.5 Z" fill="#fff" stroke="#a6a6a6" stroke-width="1" stroke-linejoin="round"/></svg>
<svg style="left:1229px;top:415px" width="7" height="7" viewBox="0 0 7 7" ><path d="M6,1 V6 H1 Z" fill="#484848" stroke="#262626" stroke-width=".9" stroke-linejoin="round"/></svg>
<svg style="left:1248px;top:433px" width="7" height="7" viewBox="0 0 7 7" ><path d="M6,1 V6 H1 Z" fill="#484848" stroke="#262626" stroke-width=".9" stroke-linejoin="round"/></svg>
<svg style="left:4px;top:671px" width="795" height="199" viewBox="0 0 795 199" ><defs><linearGradient id="g4_671" x1="0" y1="0" x2="0" y2="1"><stop offset="0" stop-color="#ffffff"/><stop offset="1" stop-color="#f0f0f0"/></linearGradient></defs><path d="M0.5,198.5 V6.5 Q0.5,0.5 6.5,0.5 H788.5 Q794.5,0.5 794.5,6.5 V198.5 Z" fill="none" stroke="#f7f7f7" stroke-width="3"/><path d="M0.5,198.5 V6.5 Q0.5,0.5 6.5,0.5 H788.5 Q794.5,0.5 794.5,6.5 V198.5 Z" fill="#f0f0f0" stroke="none"/><rect x="1" y="24" width="793" height="174" fill="#f4f4f4"/><path d="M0.5,23.5 V6.5 Q0.5,0.5 6.5,0.5 H83 C91.2,0.5 104.1,23.5 116,23.5 Z" fill="url(#g4_671)" stroke="none"/><path d="M83,0.5 C91.2,0.5 104.1,23.5 116,23.5 H794.5" fill="none" stroke="#a0a0a0" stroke-width="1"/><path d="M155.5,0.5 Q161.5,0.5 161.5,6.5 V23" fill="none" stroke="#a0a0a0" stroke-width="1"/><path d="M234.5,0.5 Q240.5,0.5 240.5,6.5 V23" fill="none" stroke="#a0a0a0" stroke-width="1"/><path d="M323.5,0.5 Q329.5,0.5 329.5,6.5 V23" fill="none" stroke="#a0a0a0" stroke-width="1"/><path d="M0.5,198.5 V6.5 Q0.5,0.5 6.5,0.5 H788.5 Q794.5,0.5 794.5,6.5 V198.5 Z" fill="none" stroke="#a0a0a0" stroke-width="1"/></svg>
<div style="left:7px;top:697px;width:789px;height:170px;background:#f0f0f0;"></div>
<svg style="left:79px;top:678px" width="11" height="11" viewBox="0 0 11 11" ><path d="M0.5,0.5 H3.2 L5.5,2.9 L7.8,0.5 H10.5 V3.2 L8.1,5.5 L10.5,7.8 V10.5 H7.8 L5.5,8.1 L3.2,10.5 H0.5 V7.8 L2.9,5.5 L0.5,3.2 Z" fill="#fff" stroke="#555" stroke-width="1" stroke-linejoin="round"/></svg>
<div style="left:600px;top:674px;width:1px;height:18px;background:#a0a0a0;"></div>
<div style="left:654px;top:674px;width:1px;height:18px;background:#a0a0a0;"></div>
<svg style="left:710px;top:682px" width="7" height="4" viewBox="0 0 7 4" ><path d="M0,0 H7 L3.5,3.5 Z" fill="#000"/></svg>
<svg style="left:748px;top:682px" width="7" height="4" viewBox="0 0 7 4" ><path d="M0,0 H7 L3.5,3.5 Z" fill="#000"/></svg>
<svg style="left:764px;top:676px" width="10" height="5" viewBox="0 0 10 5" ><rect x="0.5" y="0.5" width="9" height="3" fill="#fff" stroke="#5a5a5a" stroke-width="1"/></svg>
<svg style="left:782px;top:676px" width="11" height="11" viewBox="0 0 11 11" ><rect x="0.5" y="0.5" width="9" height="9" fill="#fff" stroke="#5a5a5a" stroke-width="1"/><path d="M0.5,2.5 H9.5" stroke="#5a5a5a" stroke-width="1"/></svg>
<div style="left:7px;top:714px;width:773px;height:137px;background:#ffffff;"></div>
<div style="left:780px;top:714px;width:16px;height:136px;background:linear-gradient(90deg,#e6e6e6,#eeeeee 25%,#f0f0f0 60%,#ececec);"></div>
<svg style="left:784px;top:720px" width="9" height="5" viewBox="0 0 9 5" ><path d="M0,4.5 H8.5 L4.25,0 Z" fill="#a8a8a8"/></svg>
<svg style="left:784px;top:839px" width="9" height="5" viewBox="0 0 9 5" ><path d="M0,0.5 H8.5 L4.25,5 Z" fill="#a8a8a8"/></svg>
<div style="left:7px;top:851px;width:773px;height:1px;background:#f6f6f6;"></div>
<div style="left:7px;top:852px;width:772px;height:15px;background:linear-gradient(180deg,#e6e6e6,#eeeeee 25%,#f0f0f0 60%,#ececec);"></div>
<svg style="left:13px;top:855px" width="5" height="9" viewBox="0 0 5 9" ><path d="M4.5,0 V8.5 L0,4.25 Z" fill="#404040"/></svg>
<svg style="left:768px;top:855px" width="5" height="9" viewBox="0 0 5 9" ><path d="M0.5,0 V8.5 L5,4.25 Z" fill="#404040"/></svg>
<div style="left:25px;top:852px;width:481px;height:14px;background:linear-gradient(180deg,#f6f6f6 0%,#e6e6e8 45%,#cfcfd2 50%,#dadadc 100%);border:1px solid #8e8e8e;border-radius:2px;box-sizing:border-box;"></div>
<div style="left:261px;top:855px;width:1px;height:8px;background:#4a4a4a;"></div>
<div style="left:262px;top:855px;width:1px;height:8px;background:#fdfdfd;"></div>
<div style="left:264px;top:855px;width:1px;height:8px;background:#4a4a4a;"></div>
<div style="left:265px;top:855px;width:1px;height:8px;background:#fdfdfd;"></div>
<div style="left:267px;top:855px;width:1px;height:8px;background:#4a4a4a;"></div>
<div style="left:268px;top:855px;width:1px;height:8px;background:#fdfdfd;"></div>
<svg style="left:802px;top:671px" width="794" height="199" viewBox="0 0 794 199" ><defs><linearGradient id="g802_671" x1="0" y1="0" x2="0" y2="1"><stop offset="0" stop-color="#f4f7fb"/><stop offset="1" stop-color="#99b4d1"/></linearGradient></defs><path d="M0.5,198.5 V6.5 Q0.5,0.5 6.5,0.5 H787.5 Q793.5,0.5 793.5,6.5 V198.5 Z" fill="none" stroke="#f7f7f7" stroke-width="3"/><path d="M0.5,198.5 V6.5 Q0.5,0.5 6.5,0.5 H787.5 Q793.5,0.5 793.5,6.5 V198.5 Z" fill="#f0f0f0" stroke="none"/><rect x="1" y="24" width="792" height="174" fill="#f4f4f4"/><rect x="1" y="23" width="792" height="175" fill="#99b4d1"/><path d="M0.5,23.5 V6.5 Q0.5,0.5 6.5,0.5 H74 C82.2,0.5 95.1,23.5 107,23.5 Z" fill="url(#g802_671)" stroke="none"/><path d="M74,0.5 C82.2,0.5 95.1,23.5 107,23.5 H793.5" fill="none" stroke="#99b4d1" stroke-width="1"/><path d="M74,0.5 C82.2,0.5 95.1,23.5 107,23.5" fill="none" stroke="#a0a0a0" stroke-width="1"/><path d="M0.5,198.5 V6.5 Q0.5,0.5 6.5,0.5 H787.5 Q793.5,0.5 793.5,6.5 V198.5 Z" fill="none" stroke="#a0a0a0" stroke-width="1"/></svg>
<svg style="left:868px;top:678px" width="11" height="11" viewBox="0 0 11 11" ><path d="M0.5,0.5 H3.2 L5.5,2.9 L7.8,0.5 H10.5 V3.2 L8.1,5.5 L10.5,7.8 V10.5 H7.8 L5.5,8.1 L3.2,10.5 H0.5 V7.8 L2.9,5.5 L0.5,3.2 Z" fill="#fff" stroke="#555" stroke-width="1" stroke-linejoin="round"/></svg>
<div style="left:1335px;top:674px;width:1px;height:18px;background:#a0a0a0;"></div>
<div style="left:1389px;top:674px;width:1px;height:18px;background:#a0a0a0;"></div>
<div style="left:1443px;top:674px;width:1px;height:18px;background:#a0a0a0;"></div>
<svg style="left:1522px;top:682px" width="7" height="4" viewBox="0 0 7 4" ><path d="M0,0 H7 L3.5,3.5 Z" fill="#000"/></svg>
<svg style="left:1561px;top:676px" width="10" height="5" viewBox="0 0 10 5" ><rect x="0.5" y="0.5" width="9" height="3" fill="#fff" stroke="#5a5a5a" stroke-width="1"/></svg>
<svg style="left:1579px;top:676px" width="11" height="11" viewBox="0 0 11 11" ><rect x="0.5" y="0.5" width="9" height="9" fill="#fff" stroke="#5a5a5a" stroke-width="1"/><path d="M0.5,2.5 H9.5" stroke="#5a5a5a" stroke-width="1"/></svg>
<div style="left:805px;top:697px;width:788px;height:15px;background:#f0f0f0;"></div>
<div style="left:805px;top:712px;width:788px;height:1px;background:#b4b4b4;"></div>
<div style="left:805px;top:713px;width:788px;height:154px;background:#ffffff;"></div>
<svg style="left:814px;top:721px" width="7" height="7" viewBox="0 0 7 7" ><path d="M6,1 V6 H1 Z" fill="#484848" stroke="#262626" stroke-width=".9" stroke-linejoin="round"/></svg>
<div style="left:844px;top:732px;width:253px;height:18px;background:linear-gradient(180deg,#ecf4fd,#d3e6fb);border:1px solid #84acdd;border-radius:3px;box-sizing:border-box;"></div>
<svg style="left:5px;top:872px" width="3" height="24" viewBox="0 0 3 24" ><rect x="0" y="0" width="2" height="2" fill="#fbfbfb"/><rect x="1" y="1" width="2" height="2" fill="#a6a6a6"/><rect x="0" y="4" width="2" height="2" fill="#fbfbfb"/><rect x="1" y="5" width="2" height="2" fill="#a6a6a6"/><rect x="0" y="8" width="2" height="2" fill="#fbfbfb"/><rect x="1" y="9" width="2" height="2" fill="#a6a6a6"/><rect x="0" y="12" width="2" height="2" fill="#fbfbfb"/><rect x="1" y="13" width="2" height="2" fill="#a6a6a6"/><rect x="0" y="16" width="2" height="2" fill="#fbfbfb"/><rect x="1" y="17" width="2" height="2" fill="#a6a6a6"/><rect x="0" y="20" width="2" height="2" fill="#fbfbfb"/><rect x="1" y="21" width="2" height="2" fill="#a6a6a6"/></svg>
<svg style="left:1311px;top:872px" width="3" height="24" viewBox="0 0 3 24" ><rect x="0" y="0" width="2" height="2" fill="#fbfbfb"/><rect x="1" y="1" width="2" height="2" fill="#a6a6a6"/><rect x="0" y="4" width="2" height="2" fill="#fbfbfb"/><rect x="1" y="5" width="2" height="2" fill="#a6a6a6"/><rect x="0" y="8" width="2" height="2" fill="#fbfbfb"/><rect x="1" y="9" width="2" height="2" fill="#a6a6a6"/><rect x="0" y="12" width="2" height="2" fill="#fbfbfb"/><rect x="1" y="13" width="2" height="2" fill="#a6a6a6"/><rect x="0" y="16" width="2" height="2" fill="#fbfbfb"/><rect x="1" y="17" width="2" height="2" fill="#a6a6a6"/><rect x="0" y="20" width="2" height="2" fill="#fbfbfb"/><rect x="1" y="21" width="2" height="2" fill="#a6a6a6"/></svg>
<svg style="left:1px;top:0px" width="18" height="20" viewBox="0 0 18 20" ><rect x="0" y="3" width="9" height="9" fill="#3a78ad"/><rect x="6" y="8" width="10" height="10" fill="#2b5f93"/>
<rect x="2" y="5" width="12" height="11.4" fill="#fff" stroke="#d8dde4" stroke-width=".6"/>
<text x="2.8" y="14" font-family="Liberation Sans,sans-serif" font-weight="bold" font-size="7.6" fill="#1c4f86" textLength="10.6" lengthAdjust="spacingAndGlyphs">CBL</text></svg>
<svg style="left:17px;top:51px" width="16" height="16" viewBox="0 0 16 16"><rect x="1.5" y="3.5" width="13" height="11" fill="#f4f9fd" stroke="#a98c4f"/>
<rect x="1" y="3" width="10.5" height="2.6" fill="#3d78bf"/><rect x="2" y="4" width="8" height="1" fill="#9cc4ee"/>
<path d="M13.5,8 Q13.5,13.5 6,14.5" fill="none" stroke="#f6d25c" stroke-width="1.4"/>
<path d="M12.5,0.8 L13.6,3 L15.8,4 L13.6,5 L12.5,7.2 L11.4,5 L9.2,4 L11.4,3 Z" fill="#fff3b0" stroke="#c99a1e" stroke-width=".9"/></svg>
<svg style="left:54px;top:51px" width="16" height="16" viewBox="0 0 16 16"><path d="M1.5,1.5 H15.5 V15.5 H2.5 L1.5,14.5 Z" fill="#e9e9e9" stroke="#c2c2c2"/>
<rect x="4.5" y="1.5" width="8" height="6.5" fill="#fafafa" stroke="#cdcdcd"/>
<rect x="5.5" y="11.5" width="7" height="4" fill="#f6f6f6" stroke="#c9c9c9"/><rect x="7" y="13" width="2" height="2.5" fill="#d4d4d4"/></svg>
<svg style="left:78px;top:51px" width="16" height="16" viewBox="0 0 16 16"><rect x="0.5" y="1.5" width="10" height="10" fill="#f0f0f0" stroke="#c6c6c6"/>
<rect x="2.5" y="3.5" width="10" height="10" fill="#f0f0f0" stroke="#c6c6c6"/>
<path d="M5.5,5.5 H15.5 V15.5 H6.5 L5.5,14.5 Z" fill="#ececec" stroke="#c0c0c0"/>
<rect x="7.5" y="5.5" width="6" height="4" fill="#fafafa" stroke="#cdcdcd"/>
<rect x="8.5" y="12.5" width="4" height="3" fill="#f8f8f8" stroke="#c9c9c9"/></svg>
<svg style="left:101px;top:51px" width="16" height="16" viewBox="0 0 16 16"><path d="M4.5,7.5 V1.5 H9.5 L11.5,3.5 V7.5" fill="#f9f9f9" stroke="#c4c4c4"/>
<path d="M6,4.5 H10 M6,6.2 H10" stroke="#c0c0c0" stroke-width="1"/>
<path d="M2.5,7.5 H13.5 Q15.5,7.5 15.5,9.5 V14.5 H0.5 V9.5 Q0.5,7.5 2.5,7.5 Z" fill="#e4e4e4" stroke="#c0c0c0"/>
<rect x="1" y="12" width="14" height="2" fill="#cbcbcb"/><rect x="1.5" y="14.5" width="13" height="1.2" fill="#d8d8d8"/></svg>
<svg style="left:132px;top:51px" width="16" height="16" viewBox="0 0 16 16"><path d="M1.5,1.5 H9.5 L13.5,5.5 V15.5 H1.5 Z" fill="#f7f9fc" stroke="#a98c4f"/>
<path d="M9.5,1.5 V5.5 H13.5 Z" fill="#e6d9b0" stroke="#a98c4f" stroke-width=".8"/>
<path d="M3.5,5 H8.5 M3.5,7.5 H11" stroke="#5b82c9" stroke-width="1.2"/>
<text x="2.6" y="14.6" font-family="Liberation Serif,serif" font-weight="bold" font-size="7.5" fill="#0f2a6b" letter-spacing="-.2">010</text></svg>
<svg style="left:170px;top:51px" width="16" height="16" viewBox="0 0 16 16"><g stroke="#1d5a63" stroke-width="1.3" fill="none" stroke-linecap="round">
<path d="M5.2,5.8 L2.2,3.4 M4.2,8.4 L0.8,8.6 M5.8,11 L4.2,14.6 M8.8,4.4 L8.6,1.2 M11.2,6.2 L14.6,4.8 M12.2,9.8 L15.2,11.6 M6.4,4.6 L5,1.8"/></g>
<ellipse cx="8.4" cy="8.2" rx="4.6" ry="3.3" transform="rotate(42 8.4 8.2)" fill="#a9cf7d" stroke="#1f6672" stroke-width="1.2"/>
<path d="M6.6,6.4 L10.4,10.4 M7.8,5.6 L11.4,9.2" stroke="#d7ecb8" stroke-width=".8"/></svg>
<svg style="left:208px;top:51px" width="16" height="16" viewBox="0 0 16 16"><circle cx="8" cy="8" r="7" fill="#2f9a35" stroke="#1c6b22" stroke-width="1"/>
<path d="M2.2,6.5 A6.2,6.2 0 0 1 13.8,6.5 A9,9 0 0 0 2.2,6.5 Z" fill="#6cc46e" opacity=".7"/>
<path d="M5.6,3.8 L12,8 L5.6,12.2 Z" fill="#fff"/></svg>
<svg style="left:245px;top:51px" width="16" height="16" viewBox="0 0 16 16"><circle cx="5.8" cy="6.4" r="5.3" fill="#2f9a35" stroke="#1c6b22" stroke-width="1"/>
<path d="M4.2,3.4 L9,6.4 L4.2,9.4 Z" fill="#fff"/>
<path d="M9.5,10.5 V9.2 H13.5 V10.5" fill="none" stroke="#b52222" stroke-width="1.2"/>
<rect x="7.5" y="10.5" width="8" height="5" rx=".8" fill="#e04040" stroke="#b52222"/>
<path d="M7.5,12.6 H15.5" stroke="#f5a0a0" stroke-width=".9"/></svg>
<svg style="left:298px;top:51px" width="16" height="16" viewBox="0 0 16 16"><path d="M0.8,6.5 L3.5,4.5 H8 V12.5 L4.5,15 H0.8 Z" fill="#f9dca0" stroke="#b97a21"/>
<path d="M0.8,14.8 L4.4,10.5 H15 L10.5,14.8 Z" fill="#fbe4b0" stroke="#b97a21"/>
<circle cx="7.3" cy="4.6" r="3.4" fill="#7d62b8"/><circle cx="6.6" cy="3.8" r="1.3" fill="#b5a3dc"/>
<circle cx="12.2" cy="7" r="3.5" fill="#2f8f43"/><circle cx="11.5" cy="6" r="1.3" fill="#7fc48c"/></svg>
<svg style="left:322px;top:51px" width="16" height="16" viewBox="0 0 16 16"><path d="M0.6,15.4 L1.2,11 L5.6,14.8 Z" fill="#fffbe0" stroke="#e8b43a" stroke-width=".8"/>
<path d="M1.2,11 L4.6,6.6 L9.2,10.4 L5.6,14.8 Z" fill="#fff4c4" stroke="#d99a2a" stroke-width=".8"/>
<path d="M4.6,6.6 L6.8,4 L11.4,7.8 L9.2,10.4 Z" fill="#9b9496" stroke="#7d7577" stroke-width=".8"/>
<path d="M6.8,4 L10.6,0.6 L15.4,0.8 L15.6,4 L11.4,7.8 Z" fill="#f7cf6e" stroke="#c98a1e" stroke-width=".8"/>
<circle cx="12.4" cy="3.2" r=".9" fill="#2b5ea8"/></svg>
<svg style="left:375px;top:51px" width="16" height="16" viewBox="0 0 16 16"><circle cx="7.5" cy="8.5" r="3.6" fill="#9dc3dc" stroke="#5d8fb5"/>
<path d="M1,2 L14.5,14.5" stroke="#1b2a8a" stroke-width="1.5"/></svg>
<svg style="left:405px;top:51px" width="16" height="16" viewBox="0 0 16 16"><rect x="1.5" y="3.5" width="3.6" height="9" fill="#fbe9a0" stroke="#c89a1e"/>
<path d="M7,3 L15.6,8 L7,13 Z" fill="#4fae55" stroke="#2a8a36" stroke-width=".9"/></svg>
<svg style="left:429px;top:51px" width="16" height="16" viewBox="0 0 16 16"><rect x="2.5" y="3.5" width="4" height="10" fill="#f2f1e8" stroke="#d2d2cc"/>
<rect x="8.5" y="3.5" width="4" height="10" fill="#f2f1e8" stroke="#d2d2cc"/></svg>
<svg style="left:451px;top:51px" width="16" height="16" viewBox="0 0 16 16"><rect x="3" y="3.5" width="11" height="10.5" rx="1" fill="#e42637" stroke="#c11a2a"/>
<rect x="4.5" y="5" width="8" height="3" fill="#ee5563" opacity=".7"/></svg>
<svg style="left:474px;top:51px" width="16" height="16" viewBox="0 0 16 16"><path d="M3.4,11.6 L4.4,3.2 L9.6,9 L13.4,9.4 L12.4,4" fill="none" stroke="#b5123a" stroke-width="1.2"/>
<path d="M9,9 L12.6,13.8 L12.6,9.4" fill="none" stroke="#b5123a" stroke-width="1.1"/>
<circle cx="3.4" cy="11.8" r="2.6" fill="#e8283c" stroke="#c01a30" stroke-width=".6"/><circle cx="2.8" cy="11" r=".9" fill="#f68"/>
<circle cx="12.4" cy="4" r="2.6" fill="#e8283c" stroke="#c01a30" stroke-width=".6"/><circle cx="11.8" cy="3.2" r=".9" fill="#f68"/></svg>
<svg style="left:505px;top:51px" width="16" height="16" viewBox="0 0 16 16"><path d="M1.5,3 H7 Q10.5,3 10.5,6.5 V8.5 H13 L9.2,12.6 L5.4,8.5 H8 V6.8 Q8,5.4 6.6,5.4 H1.5 Z" fill="#fde9a8" stroke="#b7791a" stroke-width="1" stroke-linejoin="round"/><rect x="1" y="12.5" width="4.4" height="1.8" fill="#2f4f86"/><rect x="11.6" y="12.5" width="4.4" height="1.8" fill="#2f4f86"/></svg>
<svg style="left:528px;top:51px" width="16" height="16" viewBox="0 0 16 16"><path d="M1,8.5 Q1,2.5 7.5,2.5 Q13,2.5 13.4,7.5 H15.8 L12,12 L8.2,7.5 H10.8 Q10.4,5 7.5,5 Q3.8,5 3.6,8.5 Z" fill="#fde9a8" stroke="#b7791a" stroke-width="1" stroke-linejoin="round"/><rect x="5" y="12.5" width="4.6" height="1.8" fill="#2f4f86"/></svg>
<svg style="left:551px;top:51px" width="16" height="16" viewBox="0 0 16 16"><path d="M7,14.5 V8 Q7,4.6 10.4,4.6 V2 L15.2,6 L10.4,10 V7.2 Q9.4,7.2 9.4,8.4 V14.5 Z" fill="#fde9a8" stroke="#b7791a" stroke-width="1" stroke-linejoin="round"/><rect x="0.6" y="12.5" width="4.4" height="1.8" fill="#2f4f86"/><rect x="11.6" y="12.5" width="4.4" height="1.8" fill="#2f4f86"/></svg>
<svg style="left:574px;top:51px" width="16" height="16" viewBox="0 0 16 16"><path d="M1,5 H4 V11.5 H5.5 V13 H0.5 V11.5 H2 V6.5 H1 Z" fill="#a6a6a6"/><rect x="1.6" y="2" width="2.6" height="2" fill="#a6a6a6"/>
<path d="M6,6.5 H10.5 V3.5 L15.4,7.8 L10.5,12 V9 H6 Z" fill="#ababab"/></svg>
<svg style="left:597px;top:51px" width="16" height="16" viewBox="0 0 16 16"><path d="M0.5,1.8 H12.5 M0.5,5.6 H12.5 M0.5,9.4 H6" stroke="#a9a9a9" stroke-width="1.8"/>
<path d="M7.5,9.5 Q9.5,7.4 11.6,9.2 L12.8,8 L15.6,11.8 L12,15.4 L11.6,13.4 Q8.6,13.4 7.5,9.5 Z" fill="#f4f4f4" stroke="#aeaeae" stroke-width=".9"/></svg>
<svg style="left:620px;top:51px" width="16" height="16" viewBox="0 0 16 16"><path d="M1,3.2 H11.5 V1 L15.6,4.4 L11.5,7.8 V5.6 H8.6 V9.6 H10.6 L7.4,13.4 L4.2,9.6 H6.2 V5.6 H1 Z" fill="#f2f1ea" stroke="#c9c9c2" stroke-width=".9"/>
<rect x="0.6" y="13" width="4" height="1.6" fill="#c4c4c4"/><rect x="11.6" y="13" width="4" height="1.6" fill="#c4c4c4"/></svg>
<svg style="left:657px;top:51px" width="16" height="16" viewBox="0 0 16 16"><rect x="1.5" y="1.5" width="13" height="11" fill="#fbfdff" stroke="#a98c4f"/>
<rect x="1" y="1" width="14" height="2.8" fill="#3d78bf"/><rect x="2" y="2" width="12" height="1" fill="#a6caef"/>
<path d="M3.5,6.5 H6 M3.5,8.5 H6 M3.5,10.5 H6" stroke="#e11bd0" stroke-width="1.2"/>
<circle cx="9.6" cy="8.6" r="3.4" fill="#eef3f8" stroke="#b49a5a" stroke-width="1.1"/>
<path d="M12,11 L15.6,15" stroke="#7a3b1d" stroke-width="1.9" stroke-linecap="round"/></svg>
<svg style="left:697px;top:51px" width="16" height="16" viewBox="0 0 16 16"><path d="M0.5,14.6 Q3,13.6 6,14.6" fill="none" stroke="#e9c81d" stroke-width="1.3"/>
<path d="M3.6,13.4 L6.4,9 L11,11 L9,14.6 Z" fill="#f7dc3a" stroke="#d9b51a" stroke-width=".6"/>
<path d="M6.4,9 L8.2,6 L12.4,8.4 L11,11 Z" fill="#fae66c"/>
<path d="M8.2,6 L12.6,0.6 L13.4,8 L12.4,8.4 Z" fill="#9c9482" stroke="#857d6b" stroke-width=".5"/>
<path d="M12.6,0.6 L13.8,3 L13.4,8" fill="none" stroke="#bfb8a6" stroke-width=".8"/></svg>
<svg style="left:721px;top:51px" width="16" height="16" viewBox="0 0 16 16"><rect x="0.5" y="0.5" width="15" height="15" fill="#fdfdfd" stroke="#a9b7d4"/>
<rect x="1" y="1" width="14" height="1.6" fill="#f1e4bf"/><rect x="1" y="13.6" width="14" height="1.6" fill="#f1e4bf"/>
<path d="M4.8,1 V15 M10.8,1 V15" stroke="#e6c987" stroke-width="1.3"/>
<path d="M2,4 H3.4 M2,6.4 H3.4 M2,8.8 H3.4 M2,11.2 H3.4" stroke="#5b82c9" stroke-width="1"/>
<path d="M6.4,4 H9.6 M6.4,6.4 H9.6 M6.4,8.8 H9.6 M6.4,11.2 H9.6 M12,4 H14.4 M12,6.4 H14.4 M12,8.8 H14.4 M12,11.2 H14.4" stroke="#6f97dc" stroke-width="1.1"/></svg>
<svg style="left:743px;top:51px" width="16" height="16" viewBox="0 0 16 16"><rect x="7.3" y="1.3" width="6.4" height="6" fill="#fff" stroke="#0f1f6b" stroke-width="1.8"/>
<path d="M1.2,4.4 L3,3.4 L3.6,2 L5.4,2 L6,3.4 L7.6,4.4 L6.8,6 V9.6 H2.2 V6 Z" fill="#eadcf2" stroke="#a895c9" stroke-width=".7"/>
<path d="M3.2,5 V9 M5,5 V9" stroke="#7aa2d9" stroke-width=".7"/>
<path d="M6,6.6 L12,11.4 L6,16 Z" fill="#111"/></svg>
<svg style="left:774px;top:51px" width="16" height="16" viewBox="0 0 16 16"><rect x="0.5" y="0.5" width="14" height="15" fill="#f4f4f4" stroke="#d0d0d0"/>
<path d="M2.5,2.5 H12.5 M2.5,13.5 H12.5" stroke="#c2c2c2" stroke-width="1"/>
<rect x="5" y="4.5" width="6" height="7" fill="#e2e2e6" stroke="#bcbcc6"/>
<path d="M5.5,6.8 H10.5 M5.5,9.2 H10.5" stroke="#bcbcc6" stroke-width="1"/>
<path d="M2.5,4 V12" stroke="#c8c8c8" stroke-width="1" stroke-dasharray="1,1.4"/><path d="M13,4 V12" stroke="#c8c8c8" stroke-width="1" stroke-dasharray="1,1.4"/></svg>
<svg style="left:797px;top:51px" width="16" height="16" viewBox="0 0 16 16"><rect x="0.5" y="0.5" width="14" height="15" fill="#f4f4f4" stroke="#d4d4d4"/>
<path d="M12.4,3 H6.4 Q3.2,3 3.2,6 Q3.2,8.8 6.4,8.8 V13.4 H8 V4.6 H9.6 V13.4 H11.2 V4.6 H12.4 Z" fill="#c3c3c7"/></svg>
<svg style="left:834px;top:51px" width="16" height="16" viewBox="0 0 16 16"><rect x="3.5" y="4.5" width="11" height="11" fill="#f6f6f6" stroke="#cfcfcf"/>
<path d="M9,7 H13 M9,9 H13 M9,11 H13 M9,13 H13" stroke="#d6d6d6" stroke-width="1"/>
<rect x="4.6" y="12.4" width="3" height="1.6" fill="#8ea3c4"/>
<path d="M3,0.8 H6.4 V6.4 H8.8 L4.7,11.6 L0.6,6.4 H3 Z" fill="#e9e7dd" stroke="#c2c0b6" stroke-width=".9"/></svg>
<svg style="left:872px;top:51px" width="16" height="16" viewBox="0 0 16 16"><rect x="3.5" y="0.5" width="11" height="11" fill="#f6f6f6" stroke="#cfcfcf"/>
<path d="M9,3 H13 M9,5 H13 M9,7 H13 M9,9 H13" stroke="#d6d6d6" stroke-width="1"/>
<rect x="4.6" y="1.8" width="3" height="1.6" fill="#8ea3c4"/>
<path d="M3.4,15.4 H6.8 V9.6 H9.2 L5.1,4.6 L1,9.6 H3.4 Z" fill="#e9e7dd" stroke="#c2c0b6" stroke-width=".9"/></svg>
<svg style="left:910px;top:51px" width="16" height="16" viewBox="0 0 16 16"><path d="M2,1.4 L4.6,6 M4.6,1.4 L2,6 M0.8,3.7 H5.8 M3.3,0.8 V6.6" stroke="#9aa7bd" stroke-width=".8"/>
<path d="M15.4,5.6 H8.4 V2.6 L2.6,8 L8.4,13.4 V10.4 H15.4 Z" fill="#e9e7dd" stroke="#c9c7bd" stroke-width=".9"/></svg>
<svg style="left:934px;top:51px" width="16" height="16" viewBox="0 0 16 16"><path d="M14.8,5.4 H8 V2.2 L1.2,8 L8,13.8 V10.6 H14.8 Z" fill="#fdeeb4" stroke="#c88a12" stroke-width="1.1" stroke-linejoin="round"/>
<path d="M13.6,6.6 H7 V4.6 L3,8" fill="none" stroke="#fffbe6" stroke-width="1"/></svg>
<svg style="left:972px;top:51px" width="16" height="16" viewBox="0 0 16 16"><path d="M1.2,5.4 H8 V2.2 L14.8,8 L8,13.8 V10.6 H1.2 Z" fill="#efeee6" stroke="#d2d0c6" stroke-width="1" stroke-linejoin="round"/></svg>
<svg style="left:1073px;top:51px" width="16" height="16" viewBox="0 0 16 16"><rect x="1.5" y="3.5" width="11" height="11" fill="#f6fafd" stroke="#a98c4f"/>
<rect x="1" y="3" width="9" height="2.4" fill="#3d78bf"/>
<path d="M5.5,5.5 V14.5 M1.5,9.5 H12.5" stroke="#a98c4f" stroke-width="1"/>
<path d="M12.5,0.6 L13.6,2.9 L15.8,4 L13.6,5.1 L12.5,7.4 L11.4,5.1 L9.2,4 L11.4,2.9 Z" fill="#fff3b0" stroke="#c99a1e" stroke-width=".9"/></svg>
<svg style="left:1096px;top:51px" width="16" height="16" viewBox="0 0 16 16"><g stroke="#1d5a63" stroke-width="1.3" fill="none" stroke-linecap="round">
<path d="M5.2,5.8 L2.2,3.4 M4.2,8.4 L0.8,8.6 M5.8,11 L4.2,14.6 M8.8,4.4 L8.6,1.2 M11.2,6.2 L14.6,4.8 M12.2,9.8 L15.2,11.6 M6.4,4.6 L5,1.8"/></g>
<ellipse cx="8.4" cy="8.2" rx="4.6" ry="3.3" transform="rotate(42 8.4 8.2)" fill="#a9cf7d" stroke="#1f6672" stroke-width="1.2"/>
<path d="M6.6,6.4 L10.4,10.4 M7.8,5.6 L11.4,9.2" stroke="#d7ecb8" stroke-width=".8"/></svg>
<svg style="left:1161px;top:51px" width="16" height="16" viewBox="0 0 16 16"><path d="M0.8,0.8 H9 M0.8,0.8 V8" fill="none" stroke="#2e6ea6" stroke-width="1.6"/>
<path d="M15.2,7 V15.2 H6" fill="none" stroke="#2e6ea6" stroke-width="1.6"/>
<rect x="2.5" y="2.5" width="11" height="11" fill="#fff" stroke="#c8d4e0" stroke-width=".8"/>
<text x="3.1" y="11" font-family="Liberation Sans,sans-serif" font-weight="bold" font-size="6.6" fill="#1c4f86" textLength="9.8" lengthAdjust="spacingAndGlyphs">CBL</text></svg>
<svg style="left:8px;top:79px" width="16" height="16" viewBox="0 0 16 16"><g stroke="#1d5a63" stroke-width="1.3" fill="none" stroke-linecap="round">
<path d="M5.2,5.8 L2.2,3.4 M4.2,8.4 L0.8,8.6 M5.8,11 L4.2,14.6 M8.8,4.4 L8.6,1.2 M11.2,6.2 L14.6,4.8 M12.2,9.8 L15.2,11.6 M6.4,4.6 L5,1.8"/></g>
<ellipse cx="8.4" cy="8.2" rx="4.6" ry="3.3" transform="rotate(42 8.4 8.2)" fill="#a9cf7d" stroke="#1f6672" stroke-width="1.2"/>
<path d="M6.6,6.4 L10.4,10.4 M7.8,5.6 L11.4,9.2" stroke="#d7ecb8" stroke-width=".8"/></svg>
<svg style="left:108px;top:80px" width="16" height="16" viewBox="0 0 16 16"><path d="M2.5,0.5 V13 M6.5,0.5 V13 M10.5,0.5 V13" stroke="#3a4ba0" stroke-width="1.1"/>
<rect x="4.6" y="2" width="3.8" height="3" rx="1" fill="#f4c542" stroke="#a87a12" stroke-width=".7"/>
<rect x="0.6" y="5.6" width="3.8" height="3" rx="1" fill="#c8d84a" stroke="#7a8a1a" stroke-width=".7"/>
<rect x="8.6" y="7" width="3.8" height="3" rx="1" fill="#8fc8e4" stroke="#3f7fa8" stroke-width=".7"/></svg>
<svg style="left:590px;top:79px" width="16" height="16" viewBox="0 0 16 16"><path d="M1,3.1 L3.1,1 L6,3.9 L8.9,1 L11,3.1 L8.1,6 L11,8.9 L8.9,11 L6,8.1 L3.1,11 L1,8.9 L3.9,6 Z" fill="#d8d8d8" stroke="#8a8a8a" stroke-width="0.8" stroke-linejoin="round"/><path d="M4.4,6.752000000000001 L6.752000000000001,4.4 L10,7.648 L13.248,4.4 L15.6,6.752000000000001 L12.352,10 L15.6,13.248 L13.248,15.6 L10,12.352 L6.752000000000001,15.6 L4.4,13.248 L7.648,10 Z" fill="#6a6a6a" stroke="#555555" stroke-width="0.8" stroke-linejoin="round"/></svg>
<svg style="left:613px;top:79px" width="16" height="16" viewBox="0 0 16 16"><path d="M3.4,11.6 L4.4,3.2 L9.6,9 L13.4,9.4 L12.4,4 M9,9 L12.6,13.8 L12.6,9.4 M4.4,3.2 L8.6,12" fill="none" stroke="#b9b9b9" stroke-width="1"/>
<circle cx="3.4" cy="11.8" r="2.6" fill="#b2b2b2"/><circle cx="12.4" cy="4" r="2.6" fill="#b2b2b2"/></svg>
<svg style="left:644px;top:79px" width="16" height="16" viewBox="0 0 16 16"><path d="M0.8,6.8 H6.6 V4.4 L11.2,8 L6.6,11.6 V9.2 H0.8 Z" fill="#fdeeb4" stroke="#c88a12" stroke-width="1" stroke-linejoin="round"/>
<path d="M11.5,1.5 H15.5 M11.5,14.5 H15.5 M13.5,1.5 V14.5" stroke="#3b6fc4" stroke-width="1.1" fill="none"/></svg>
<svg style="left:667px;top:79px" width="16" height="16" viewBox="0 0 16 16"><path d="M1,8.5 Q1,2.5 7.5,2.5 Q13,2.5 13.4,7.5 H15.8 L12,12 L8.2,7.5 H10.8 Q10.4,5 7.5,5 Q3.8,5 3.6,8.5 Z" fill="#f3f3f3" stroke="#bdbdbd" stroke-width="1"/>
<rect x="1" y="12.5" width="4.4" height="1.8" fill="#bcbcbc"/><rect x="9.6" y="12.5" width="4.4" height="1.8" fill="#bcbcbc"/></svg>
<svg style="left:689px;top:79px" width="16" height="16" viewBox="0 0 16 16"><g stroke="#c4c4c4" stroke-width=".9" fill="none"><path d="M8,1 V15 M2,4.5 L14,11.5 M14,4.5 L2,11.5"/>
<path d="M6,2.4 L8,4.2 L10,2.4 M6,13.6 L8,11.8 L10,13.6 M2.2,7 L4.6,6 L4,3.6 M13.8,7 L11.4,6 L12,3.6 M2.2,9 L4.6,10 L4,12.4 M13.8,9 L11.4,10 L12,12.4"/></g></svg>
<svg style="left:720px;top:79px" width="16" height="16" viewBox="0 0 16 16"><path d="M1,5 H4.4 V11.5 H5.8 V13.2 H0.6 V11.5 H2 V6.7 H1 Z" fill="#10148a"/><rect x="1.8" y="1.8" width="2.8" height="2.2" fill="#10148a"/>
<path d="M6.4,6.5 H10.6 V3.6 L15.6,8 L10.6,12.4 V9.5 H6.4 Z" fill="#e6dc3c" stroke="#9a7a12" stroke-width=".9" stroke-linejoin="round"/></svg>
<svg style="left:29px;top:102px" width="16" height="16" viewBox="0 0 16 16"><rect x="0.5" y="0.5" width="14" height="13" fill="#fbfdff" stroke="#5b82d4"/><rect x="0.5" y="0.5" width="14" height="3" fill="#2f5fcf" stroke="#2f5fcf"/>
<path d="M2,2 H9" stroke="#8fb4f0" stroke-width="1"/><rect x="10" y="1.4" width="1.2" height="1.2" fill="#5fbf4f"/><rect x="12" y="1.4" width="1.2" height="1.2" fill="#e05050"/>
<text x="3" y="10" font-family="Liberation Sans,sans-serif" font-weight="bold" font-size="6.5" fill="#2f5fcf" textLength="9.6" lengthAdjust="spacingAndGlyphs">CBL</text>
<path d="M0.5,9.4 L2,7.6 H6 L7,8.8 H11 V15.4 H0.5 Z" fill="#f7d98a" stroke="#d4a03c" stroke-width=".8"/>
<circle cx="10.6" cy="12.4" r="3.2" fill="#2fb84a"/><path d="M9,12.4 L10.2,13.8 L12.4,11.2" fill="none" stroke="#fff" stroke-width="1.1"/></svg>
<svg style="left:48px;top:120px" width="16" height="16" viewBox="0 0 16 16"><path d="M14.96,5.00 L14.96,6.20 L13.60,6.46 L13.27,7.25 L14.05,8.40 L13.20,9.25 L12.05,8.47 L11.26,8.80 L11.00,10.16 L9.80,10.16 L9.54,8.80 L8.75,8.47 L7.60,9.25 L6.75,8.40 L7.53,7.25 L7.20,6.46 L5.84,6.20 L5.84,5.00 L7.20,4.74 L7.53,3.95 L6.75,2.80 L7.60,1.95 L8.75,2.73 L9.54,2.40 L9.80,1.04 L11.00,1.04 L11.26,2.40 L12.05,2.73 L13.20,1.95 L14.05,2.80 L13.27,3.95 L13.60,4.74 Z" fill="#f5c04a" stroke="#a8641a" stroke-width=".9" stroke-linejoin="round"/><circle cx="10.4" cy="5.6" r="1.47" fill="#fff" stroke="#a8641a" stroke-width=".8"/><rect x="0.8" y="9" width="3" height="6" fill="#f6d98a" stroke="#a87a12" stroke-width=".8"/><rect x="5" y="9" width="3" height="6" fill="#f6d98a" stroke="#a87a12" stroke-width=".8"/>
<path d="M1.2,1.8 V4.4 H3.8 M1.2,4.4 L4.6,1" fill="none" stroke="#1f4fa0" stroke-width="1.2"/><path d="M11.4,11.2 H14 V13.8 M14,11.2 L10.6,14.6" fill="none" stroke="#1f4fa0" stroke-width="1.2"/></svg>
<svg style="left:67px;top:138px" width="16" height="16" viewBox="0 0 16 16"><path d="M14.96,5.43 L14.96,6.57 L13.66,6.82 L13.34,7.58 L14.09,8.68 L13.28,9.49 L12.18,8.74 L11.42,9.06 L11.17,10.36 L10.03,10.36 L9.78,9.06 L9.02,8.74 L7.92,9.49 L7.11,8.68 L7.86,7.58 L7.54,6.82 L6.24,6.57 L6.24,5.43 L7.54,5.18 L7.86,4.42 L7.11,3.32 L7.92,2.51 L9.02,3.26 L9.78,2.94 L10.03,1.64 L11.17,1.64 L11.42,2.94 L12.18,3.26 L13.28,2.51 L14.09,3.32 L13.34,4.42 L13.66,5.18 Z" fill="#f5c04a" stroke="#a8641a" stroke-width=".9" stroke-linejoin="round"/><circle cx="10.6" cy="6" r="1.41" fill="#fff" stroke="#a8641a" stroke-width=".8"/><rect x="1" y="8.6" width="3" height="6.4" fill="#f6d98a" stroke="#a87a12" stroke-width=".8"/><rect x="5.2" y="8.6" width="3" height="6.4" fill="#f6d98a" stroke="#a87a12" stroke-width=".8"/></svg>
<svg style="left:87px;top:156px" width="16" height="16" viewBox="0 0 16 16"><path d="M1,3.8 H13 M1,7.6 H13 M1,11.4 H13" stroke="#2f5f9c" stroke-width="2.3"/></svg>
<svg style="left:67px;top:174px" width="16" height="16" viewBox="0 0 16 16"><path d="M14.96,5.43 L14.96,6.57 L13.66,6.82 L13.34,7.58 L14.09,8.68 L13.28,9.49 L12.18,8.74 L11.42,9.06 L11.17,10.36 L10.03,10.36 L9.78,9.06 L9.02,8.74 L7.92,9.49 L7.11,8.68 L7.86,7.58 L7.54,6.82 L6.24,6.57 L6.24,5.43 L7.54,5.18 L7.86,4.42 L7.11,3.32 L7.92,2.51 L9.02,3.26 L9.78,2.94 L10.03,1.64 L11.17,1.64 L11.42,2.94 L12.18,3.26 L13.28,2.51 L14.09,3.32 L13.34,4.42 L13.66,5.18 Z" fill="#f5c04a" stroke="#a8641a" stroke-width=".9" stroke-linejoin="round"/><circle cx="10.6" cy="6" r="1.41" fill="#fff" stroke="#a8641a" stroke-width=".8"/><rect x="1" y="8.6" width="3" height="6.4" fill="#f6d98a" stroke="#a87a12" stroke-width=".8"/><rect x="5.2" y="8.6" width="3" height="6.4" fill="#f6d98a" stroke="#a87a12" stroke-width=".8"/></svg>
<svg style="left:87px;top:192px" width="16" height="16" viewBox="0 0 16 16"><path d="M1,3.8 H13 M1,7.6 H13 M1,11.4 H13" stroke="#2f5f9c" stroke-width="2.3"/></svg>
<svg style="left:806px;top:80px" width="16" height="16" viewBox="0 0 16 16"><text x="0" y="10.5" font-family="Liberation Sans,sans-serif" font-weight="bold" font-size="9.5" fill="#33415f" textLength="16" lengthAdjust="spacingAndGlyphs">(x)=</text></svg>
<svg style="left:882px;top:79px" width="16" height="16" viewBox="0 0 16 16"><circle cx="4.2" cy="4.6" r="3.2" fill="#7fb1dc" stroke="#1f4f9c" stroke-width="1"/><circle cx="11" cy="10.4" r="3.4" fill="#7fb1dc" stroke="#2e6ea6" stroke-width="1"/></svg>
<svg style="left:1257px;top:79px" width="16" height="16" viewBox="0 0 16 16"><path d="M2,4.52 L4.52,2 L8,5.48 L11.48,2 L14,4.52 L10.52,8 L14,11.48 L11.48,14 L8,10.52 L4.52,14 L2,11.48 L5.48,8 Z" fill="#b4b4b4" stroke="#a8a8a8" stroke-width="0.8" stroke-linejoin="round"/></svg>
<svg style="left:1279px;top:79px" width="16" height="16" viewBox="0 0 16 16"><path d="M1,3.1 L3.1,1 L6,3.9 L8.9,1 L11,3.1 L8.1,6 L11,8.9 L8.9,11 L6,8.1 L3.1,11 L1,8.9 L3.9,6 Z" fill="#ececec" stroke="#bdbdbd" stroke-width="0.8" stroke-linejoin="round"/><path d="M4.4,6.752000000000001 L6.752000000000001,4.4 L10,7.648 L13.248,4.4 L15.6,6.752000000000001 L12.352,10 L15.6,13.248 L13.248,15.6 L10,12.352 L6.752000000000001,15.6 L4.4,13.248 L7.648,10 Z" fill="#b4b4b4" stroke="#a8a8a8" stroke-width="0.8" stroke-linejoin="round"/></svg>
<svg style="left:1302px;top:79px" width="16" height="16" viewBox="0 0 16 16"><path d="M14.86,4.64 L14.86,5.76 L13.59,6.00 L13.28,6.75 L14.01,7.82 L13.22,8.61 L12.15,7.88 L11.40,8.19 L11.16,9.46 L10.04,9.46 L9.80,8.19 L9.05,7.88 L7.98,8.61 L7.19,7.82 L7.92,6.75 L7.61,6.00 L6.34,5.76 L6.34,4.64 L7.61,4.40 L7.92,3.65 L7.19,2.58 L7.98,1.79 L9.05,2.52 L9.80,2.21 L10.04,0.94 L11.16,0.94 L11.40,2.21 L12.15,2.52 L13.22,1.79 L14.01,2.58 L13.28,3.65 L13.59,4.40 Z" fill="#f5c04a" stroke="#a8641a" stroke-width=".9" stroke-linejoin="round"/><circle cx="10.6" cy="5.2" r="1.38" fill="#fff" stroke="#a8641a" stroke-width=".8"/><path d="M9.26,10.24 L9.26,11.36 L7.99,11.60 L7.68,12.35 L8.41,13.42 L7.62,14.21 L6.55,13.48 L5.80,13.79 L5.56,15.06 L4.44,15.06 L4.20,13.79 L3.45,13.48 L2.38,14.21 L1.59,13.42 L2.32,12.35 L2.01,11.60 L0.74,11.36 L0.74,10.24 L2.01,10.00 L2.32,9.25 L1.59,8.18 L2.38,7.39 L3.45,8.12 L4.20,7.81 L4.44,6.54 L5.56,6.54 L5.80,7.81 L6.55,8.12 L7.62,7.39 L8.41,8.18 L7.68,9.25 L7.99,10.00 Z" fill="#f5c04a" stroke="#a8641a" stroke-width=".9" stroke-linejoin="round"/><circle cx="5" cy="10.8" r="1.38" fill="#fff" stroke="#a8641a" stroke-width=".8"/><path d="M1,1.6 V4 H3.4 M1,4 L4,1" fill="none" stroke="#1f5fb5" stroke-width="1.3"/>
<path d="M12.6,11.8 H15 V14.2 M15,11.8 L12,14.8" fill="none" stroke="#1f5fb5" stroke-width="1.3"/></svg>
<svg style="left:1325px;top:79px" width="16" height="16" viewBox="0 0 16 16"><rect x="5.5" y="0.5" width="10" height="15" fill="#f6f6f6" stroke="#d2d2d2"/>
<path d="M8,3.5 H13.5 M8,5.5 H13.5 M8,10.5 H13.5 M8,12.5 H13.5" stroke="#dcdcdc" stroke-width="1"/>
<rect x="11" y="7" width="3.4" height="2.4" fill="#b9bcc8"/>
<path d="M0.8,6.4 H6 V4 L10.6,8 L6,12 V9.6 H0.8 Z" fill="#efeee6" stroke="#c8c6bc" stroke-width=".9"/></svg>
<svg style="left:1349px;top:79px" width="16" height="16" viewBox="0 0 16 16"><circle cx="7.5" cy="8.5" r="3.6" fill="#9dc3dc" stroke="#5d8fb5"/>
<path d="M1,2 L14.5,14.5" stroke="#1b2a8a" stroke-width="1.5"/></svg>
<svg style="left:1379px;top:79px" width="16" height="16" viewBox="0 0 16 16"><circle cx="7.5" cy="7" r="6.3" fill="#2f8f3f" stroke="#1f6f2c" stroke-width="1.1"/>
<circle cx="7.5" cy="7" r="5" fill="none" stroke="#7cc487" stroke-width=".8" stroke-dasharray="1.4,1.2"/>
<path d="M4.6,3.4 H8.8 Q11.4,3.4 11.4,5.6 Q11.4,7.8 8.8,7.8 H6.6 V10.8 H4.6 Z M6.6,4.8 V6.4 H9.2 V4.8 Z" fill="#fff" fill-rule="evenodd"/></svg>
<svg style="left:1410px;top:79px" width="16" height="16" viewBox="0 0 16 16"><rect x="1.5" y="1.5" width="10" height="10" fill="#f6f6f6" stroke="#cdcdcd"/><rect x="4.5" y="4.5" width="10" height="10" fill="#f6f6f6" stroke="#bdbdbd"/><path d="M6.5,9.5 H12.5" stroke="#bdbdbd" stroke-width="1.3"/><path d="M9.5,6.5 V12.5" stroke="#bdbdbd" stroke-width="1.3"/></svg>
<svg style="left:1433px;top:79px" width="16" height="16" viewBox="0 0 16 16"><rect x="1.5" y="1.5" width="10" height="10" fill="#f6f6f6" stroke="#cdcdcd"/><rect x="4.5" y="4.5" width="10" height="10" fill="#f6f6f6" stroke="#bdbdbd"/><path d="M6.5,9.5 H12.5" stroke="#bdbdbd" stroke-width="1.3"/></svg>
<svg style="left:1456px;top:79px" width="16" height="16" viewBox="0 0 16 16"><path d="M15,3.6 H6.4 V1 L1,5 L6.4,9 V6.4 H15 Z" fill="#fdeeb4" stroke="#c88a12" stroke-width="1" stroke-linejoin="round" transform="translate(0,-.3) scale(.96)"/>
<path d="M1.4,10 H10 V7.4 L15.4,11.4 L10,15.4 V12.8 H1.4 Z" fill="#fdeeb4" stroke="#c88a12" stroke-width="1" stroke-linejoin="round" transform="translate(.4,.3) scale(.96)"/></svg>
<svg style="left:1488px;top:79px" width="16" height="16" viewBox="0 0 16 16"><path d="M5.4,1.4 H7.4 V7 Q7.4,9.6 4.6,9.6 Q3,9.6 2,8.6 L3,7.2 Q3.8,7.9 4.5,7.9 Q5.4,7.9 5.4,6.8 Z" fill="#2b62b4"/>
<rect x="9.6" y="3.4" width="3" height="7.4" rx="1.4" fill="#f6d353" stroke="#c7961c" stroke-width=".8"/>
<circle cx="11.1" cy="13.4" r="1.7" fill="#f6d353" stroke="#c7961c" stroke-width=".8"/></svg>
<svg style="left:1518px;top:79px" width="16" height="16" viewBox="0 0 16 16"><path d="M1,5.4 L6,0.8 Q7.8,0.4 7.8,2.4 L8.4,8.4 L4.4,12 Z" fill="#ede59a" stroke="#c6bb62" stroke-width=".8"/>
<path d="M1,5.4 Q3,4.8 3.4,7" fill="none" stroke="#c6bb62" stroke-width=".8"/>
<circle cx="3.6" cy="13.2" r="1.6" fill="#f6d353" stroke="#2b4f9a" stroke-width=".8"/>
<circle cx="11.4" cy="11.6" r="3.6" fill="#5c9fd2" stroke="#2e6ea6" stroke-width="1"/><path d="M9.6,11.6 H13.2" stroke="#d8ecfa" stroke-width="1.1"/></svg>
<svg style="left:8px;top:350px" width="16" height="16" viewBox="0 0 16 16"><path d="M1.5,0.5 H8.5 L11.5,3.5 V14.5 H1.5 Z" fill="#f4f7fc" stroke="#a98c4f"/><path d="M8.5,0.5 V3.5 H11.5 Z" fill="#eadfbc" stroke="#a98c4f" stroke-width=".7"/>
<rect x="3.4" y="5.4" width="6.2" height="6.2" fill="#fff" stroke="#13306b" stroke-width="1.8"/><rect x="6.4" y="8.4" width="3.4" height="3.4" fill="#13306b"/></svg>
<svg style="left:39px;top:379px" width="16" height="16" viewBox="0 0 16 16"><path d="M1.5,0.5 H8.5 L11.5,3.5 V14.5 H1.5 Z" fill="#f4f7fc" stroke="#a98c4f"/><path d="M8.5,0.5 V3.5 H11.5 Z" fill="#eadfbc" stroke="#a98c4f" stroke-width=".7"/>
<rect x="3.4" y="5.4" width="6.2" height="6.2" fill="#fff" stroke="#13306b" stroke-width="1.8"/><rect x="6.4" y="8.4" width="3.4" height="3.4" fill="#13306b"/></svg>
<svg style="left:464px;top:350px" width="16" height="16" viewBox="0 0 16 16"><g fill="none" stroke="#3a4a78" stroke-width="1.1"><circle cx="3.6" cy="6.4" r="2.6"/><circle cx="10" cy="6.4" r="2.6"/><path d="M1,5.4 Q2,0.8 5,1.2 M12.6,5.6 Q12.4,1 15.4,1.4 M6.2,6 Q6.8,5 7.4,6"/></g>
<path d="M5,11 L7.4,13.4 M7.4,11 L5,13.4" stroke="#3a4a78" stroke-width="1"/><path d="M9,11.4 H12.4 M9,13.2 H12.4" stroke="#3a4a78" stroke-width="1"/></svg>
<svg style="left:940px;top:350px" width="16" height="16" viewBox="0 0 16 16"><path d="M4.5,6.5 H14.5 V12 L12,14.5 H4.5 Z" fill="#f6f6f6" stroke="#c8c8c8"/>
<path d="M6,12.5 H7.4 M8.6,12.5 H10 M11.2,12.5 H12.6" stroke="#b8b8b8" stroke-width="1.2"/>
<path d="M3,9 Q2,4 6,1.6 M2,6 Q5,3 8,2 M5.4,1 Q7.6,4 5,8" fill="none" stroke="#b2b2b2" stroke-width="1.1"/></svg>
<svg style="left:964px;top:350px" width="16" height="16" viewBox="0 0 16 16"><path d="M0.8,6.4 H4.6 V4.2 L8.6,8 L4.6,11.8 V9.6 H0.8 Z" fill="#fdeeb4" stroke="#b98512" stroke-width=".9" stroke-linejoin="round"/>
<path d="M10.5,3 V13.5 M10.5,7.5 H13 M10.5,13.5 H13 M8.6,4.6 L10.5,2 L12.4,4.6" fill="none" stroke="#3b66b8" stroke-width="1.1"/>
<path d="M12.4,3.5 H15" stroke="#3b66b8" stroke-width="1"/>
<rect x="12.6" y="6" width="3" height="3" fill="#f4a0a8" stroke="#d22c3c" stroke-width=".8"/><rect x="12.6" y="11.8" width="3" height="3" fill="#f4a0a8" stroke="#d22c3c" stroke-width=".8"/></svg>
<svg style="left:987px;top:350px" width="16" height="16" viewBox="0 0 16 16"><rect x="1.5" y="1.5" width="10" height="10" fill="#eef3fb" stroke="#9aaed6"/><rect x="3.5" y="3.5" width="11" height="11" fill="#f4f8fd" stroke="#7f97cc"/>
<path d="M5.5,9 H12.5" stroke="#163f8c" stroke-width="1.7"/></svg>
<svg style="left:1017px;top:350px" width="16" height="16" viewBox="0 0 16 16"><path d="M6.5,2.5 H9.5 V6.5 H13.5 V9.5 H9.5 V13.5 H6.5 V9.5 H2.5 V6.5 H6.5 Z" fill="#8fc63c" stroke="#4f8f1a" stroke-width="1" stroke-linejoin="round"/>
<path d="M7.4,3.6 H8.6 V7.4 H12.4" fill="none" stroke="#d2ec9c" stroke-width="1"/></svg>
<svg style="left:1041px;top:350px" width="16" height="16" viewBox="0 0 16 16"><path d="M2,4.52 L4.52,2 L8,5.48 L11.48,2 L14,4.52 L10.52,8 L14,11.48 L11.48,14 L8,10.52 L4.52,14 L2,11.48 L5.48,8 Z" fill="#b4b4b4" stroke="#a8a8a8" stroke-width="0.8" stroke-linejoin="round"/></svg>
<svg style="left:1063px;top:350px" width="16" height="16" viewBox="0 0 16 16"><path d="M1,3.1 L3.1,1 L6,3.9 L8.9,1 L11,3.1 L8.1,6 L11,8.9 L8.9,11 L6,8.1 L3.1,11 L1,8.9 L3.9,6 Z" fill="#d8d8d8" stroke="#8a8a8a" stroke-width="0.8" stroke-linejoin="round"/><path d="M4.4,6.752000000000001 L6.752000000000001,4.4 L10,7.648 L13.248,4.4 L15.6,6.752000000000001 L12.352,10 L15.6,13.248 L13.248,15.6 L10,12.352 L6.752000000000001,15.6 L4.4,13.248 L7.648,10 Z" fill="#6a6a6a" stroke="#555555" stroke-width="0.8" stroke-linejoin="round"/></svg>
<svg style="left:1095px;top:350px" width="16" height="16" viewBox="0 0 16 16"><rect x="1.5" y="3.5" width="13" height="11" fill="#f4f9fd" stroke="#a98c4f"/>
<rect x="1" y="3" width="10.5" height="2.6" fill="#3d78bf"/><rect x="2" y="4" width="8" height="1" fill="#9cc4ee"/>
<path d="M13.5,8 Q13.5,13.5 6,14.5" fill="none" stroke="#f6d25c" stroke-width="1.4"/>
<path d="M12.5,0.8 L13.6,3 L15.8,4 L13.6,5 L12.5,7.2 L11.4,5 L9.2,4 L11.4,3 Z" fill="#fff3b0" stroke="#c99a1e" stroke-width=".9"/></svg>
<svg style="left:1118px;top:350px" width="16" height="16" viewBox="0 0 16 16"><rect x="1.5" y="6.5" width="11" height="8" fill="#f4f4f4" stroke="#bdbdbd"/><rect x="1.5" y="6.5" width="11" height="2" fill="#d9d9d9" stroke="#bdbdbd"/>
<path d="M7,10 L11,5.6 M10,3 L13.6,6.6 M10.6,4.6 L13,1.4 L15.4,3.6 L12.4,6" fill="none" stroke="#b2b2b2" stroke-width="1.1"/></svg>
<svg style="left:486px;top:396px" width="16" height="16" viewBox="0 0 16 16"><text x="0" y="7.4" font-family="Liberation Sans,sans-serif" font-weight="bold" font-size="9" fill="#2f55a8" textLength="15.5" lengthAdjust="spacingAndGlyphs">x+y</text>
<text x="0.4" y="15.6" font-family="Liberation Sans,sans-serif" font-weight="bold" font-size="9" fill="#2f55a8">=?</text></svg>
<svg style="left:484px;top:415px" width="16" height="16" viewBox="0 0 16 16"><path d="M6.5,2.5 H9.5 V6.5 H13.5 V9.5 H9.5 V13.5 H6.5 V9.5 H2.5 V6.5 H6.5 Z" fill="#8fc63c" stroke="#4f8f1a" stroke-width="1" stroke-linejoin="round"/>
<path d="M7.4,3.6 H8.6 V7.4 H12.4" fill="none" stroke="#d2ec9c" stroke-width="1"/></svg>
<svg style="left:1203px;top:350px" width="16" height="16" viewBox="0 0 16 16"><rect x="1" y="1" width="4.6" height="4.6" fill="#d8ecfb" stroke="#1f6fc4" stroke-width="1"/><rect x="1" y="9.4" width="4.6" height="4.6" fill="#d8ecfb" stroke="#1f6fc4" stroke-width="1"/>
<path d="M8,3.3 H14 M8,11.7 H14 M11.4,7.5 H14" stroke="#1f6fc4" stroke-width="1.1"/><rect x="8.2" y="6.4" width="2.2" height="2.2" fill="#fff" stroke="#1f6fc4" stroke-width=".8"/></svg>
<svg style="left:1518px;top:350px" width="16" height="16" viewBox="0 0 16 16"><path d="M2.5,1.5 V14 M0.4,11.2 L2.5,14.4 L4.6,11.2" fill="none" stroke="#444" stroke-width="1.2"/>
<text x="5" y="8.6" font-family="Liberation Serif,serif" font-weight="bold" font-size="13.5" fill="#127a6a">a</text>
<text x="8.4" y="16.6" font-family="Liberation Serif,serif" font-weight="bold" font-size="13.5" fill="#8a2a9a">z</text></svg>
<svg style="left:1224px;top:373px" width="16" height="16" viewBox="0 0 16 16"><rect x="2" y="2" width="12" height="12" fill="#f9dcae" stroke="#a8581a" stroke-width="1.2"/>
<path d="M8,0.4 V15.6 M0.4,8 H15.6" stroke="#7a3c12" stroke-width="1.2"/><rect x="3.2" y="3.2" width="3.6" height="3.6" fill="#fdeccd"/><rect x="9.2" y="9.2" width="3.6" height="3.6" fill="#fdeccd"/></svg>
<svg style="left:1243px;top:391px" width="16" height="16" viewBox="0 0 16 16"><rect x="0.8" y="0.8" width="5.4" height="5.4" fill="#e4566a" stroke="#c42c44" stroke-width=".8"/>
<circle cx="11.6" cy="3.6" r="2.9" fill="#4e9a5c" stroke="#2c7a3c" stroke-width=".8"/>
<path d="M3.5,8.6 L6.4,14.4 H0.6 Z" fill="#2858a8" stroke="#1a3f86" stroke-width=".6"/>
<path d="M11.6,8.4 L14.6,11.5 L11.6,14.6 L8.6,11.5 Z" fill="#f7c552" stroke="#c88a12" stroke-width=".8"/></svg>
<svg style="left:1243px;top:409px" width="16" height="16" viewBox="0 0 16 16"><g stroke="#1f8a4a" stroke-width="1.1" fill="#8ac890"><path d="M1,4 L9,12 A3.5,3.5 0 0 0 14,7.4 L6,0.8 A3.5,3.5 0 0 0 1,4 Z" fill="#6fb87a"/>
<circle cx="3.8" cy="3.6" r="3"/><circle cx="7.6" cy="6.8" r="3"/><circle cx="11.2" cy="10.2" r="3.2"/></g></svg>
<svg style="left:1261px;top:427px" width="16" height="16" viewBox="0 0 16 16"><circle cx="8" cy="8.6" r="3.5" fill="#86c088" stroke="#2c8a4a" stroke-width="1.1"/></svg>
<svg style="left:1280px;top:445px" width="16" height="16" viewBox="0 0 16 16"><circle cx="8" cy="8.6" r="3.5" fill="#86c088" stroke="#2c8a4a" stroke-width="1.1"/></svg>
<svg style="left:1280px;top:463px" width="16" height="16" viewBox="0 0 16 16"><circle cx="8" cy="8.6" r="3.5" fill="#86c088" stroke="#2c8a4a" stroke-width="1.1"/></svg>
<svg style="left:9px;top:675px" width="16" height="16" viewBox="0 0 16 16"><rect x="1.5" y="0.8" width="12" height="9.6" rx=".8" fill="#2f66c2" stroke="#1f4f9c"/>
<rect x="3" y="2.4" width="9" height="6.4" fill="#eef4fc"/>
<path d="M4,4.4 H8.6 M4,6.6 H10.6" stroke="#3b66b8" stroke-width="1.1"/>
<path d="M5.4,10.6 H9.6 V12 H12.6 V13.6 H2.4 V12 H5.4 Z" fill="#2f66c2"/></svg>
<svg style="left:115px;top:675px" width="16" height="16" viewBox="0 0 16 16"><rect x="3.5" y="2.5" width="10" height="12" fill="#fbfcfe" stroke="#a98c4f"/><rect x="6" y="0.8" width="5" height="3" rx="1" fill="#b8a888" stroke="#7a6a4a" stroke-width=".7"/>
<path d="M8,6.5 H12 M8,9 H12 M8,11.5 H12" stroke="#6d92d4" stroke-width="1"/>
<path d="M0.8,8.4 L3,11 L7.4,5" fill="none" stroke="#1f4fb0" stroke-width="1.7"/></svg>
<svg style="left:172px;top:675px" width="16" height="16" viewBox="0 0 16 16"><rect x="0.5" y="0.5" width="14" height="15" fill="#f7f7f7" stroke="#9c9c9c"/>
<rect x="2" y="2" width="5.4" height="5.4" rx="1" fill="#e33a3a" stroke="#a81c1c" stroke-width=".7"/>
<path d="M4.7,9 L7.6,14 H1.8 Z" fill="#f6c53c" stroke="#a87a12" stroke-width=".7"/>
<path d="M9.5,2 V14 M11.8,2 V7 M11.8,10 V14" stroke="#c9c9c9" stroke-width="1"/></svg>
<svg style="left:250px;top:675px" width="16" height="16" viewBox="0 0 16 16"><circle cx="7.5" cy="8" r="6.8" fill="#5b7fc4" stroke="#9ab0dc" stroke-width="1.2"/><circle cx="7.5" cy="8" r="5.4" fill="#4a6eb8"/>
<path d="M5.6,4.4 L11.4,8 L5.6,11.6 Z" fill="#fff"/></svg>
<svg style="left:579px;top:675px" width="16" height="16" viewBox="0 0 16 16"><path d="M2,4.52 L4.52,2 L8,5.48 L11.48,2 L14,4.52 L10.52,8 L14,11.48 L11.48,14 L8,10.52 L4.52,14 L2,11.48 L5.48,8 Z" fill="#6a6a6a" stroke="#555555" stroke-width="0.8" stroke-linejoin="round"/></svg>
<svg style="left:610px;top:675px" width="16" height="16" viewBox="0 0 16 16"><path d="M1.5,0.5 H7.5 L10.5,3.5 V12.5 H1.5 Z" fill="#fbfcfe" stroke="#a98c4f"/><path d="M7.5,0.5 V3.5 H10.5" fill="#eadfbc" stroke="#a98c4f" stroke-width=".8"/>
<path d="M3,4.5 H7 M3,6.5 H9 M3,8.5 H9 M3,10.5 H7" stroke="#6d92d4" stroke-width="1"/><path d="M7.3,9.064 L9.064,7.3 L11.5,9.736 L13.936,7.3 L15.7,9.064 L13.264,11.5 L15.7,13.936 L13.936,15.7 L11.5,13.264 L9.064,15.7 L7.3,13.936 L9.736,11.5 Z" fill="#4e4e4e" stroke="#3c3c3c" stroke-width="0.6" stroke-linejoin="round"/></svg>
<svg style="left:632px;top:675px" width="16" height="16" viewBox="0 0 16 16"><rect x="2.5" y="0.5" width="13" height="14" fill="#e8f0fa" stroke="#9ab0d4"/>
<rect x="11.5" y="0.5" width="4" height="14" fill="#d5e2f5" stroke="#8aa2cc"/>
<rect x="12.6" y="2" width="1.8" height="2" fill="#3b66b8"/><rect x="12.6" y="11" width="1.8" height="2" fill="#3b66b8"/><rect x="12.4" y="6" width="2.2" height="3" fill="#fff" stroke="#8aa2cc" stroke-width=".6"/>
<path d="M3,9 V6.6 Q3,4 5.5,4 Q8,4 8,6.6 V9" fill="none" stroke="#b78a1a" stroke-width="1.5"/>
<rect x="1" y="8.6" width="9" height="7" rx="1" fill="#f3c54a" stroke="#a87a12" stroke-width=".9"/><rect x="4.8" y="11" width="1.4" height="2.4" fill="#6a4a08"/></svg>
<svg style="left:664px;top:675px" width="16" height="16" viewBox="0 0 16 16"><rect x="0.5" y="5.5" width="12" height="9" fill="#f8fbfe" stroke="#5f8fcf"/><rect x="0.5" y="5.5" width="12" height="2.4" fill="#3d78bf" stroke="#3d78bf"/>
<path d="M5.5,10.4 L9.4,6.4" stroke="#444" stroke-width="1.1"/>
<path d="M8.6,4.2 L12,7.6 L15.2,3.6 Q15.8,1.4 13.6,0.8 Q12.4,0.6 11.6,1.4 Z" fill="#3aa346" stroke="#1f7a2c" stroke-width=".8"/><circle cx="13" cy="2.6" r="1" fill="#8fd897"/></svg>
<svg style="left:688px;top:675px" width="16" height="16" viewBox="0 0 16 16"><rect x="1.5" y="0.8" width="12" height="9.6" rx=".8" fill="#2f66c2" stroke="#1f4f9c"/>
<rect x="3" y="2.4" width="9" height="6.4" fill="#eef4fc"/>
<path d="M4,4.4 H8.6 M4,6.6 H10.6" stroke="#3b66b8" stroke-width="1.1"/>
<path d="M5.4,10.6 H9.6 V12 H12.6 V13.6 H2.4 V12 H5.4 Z" fill="#2f66c2"/></svg>
<svg style="left:726px;top:675px" width="16" height="16" viewBox="0 0 16 16"><rect x="1.5" y="3.5" width="13" height="11" fill="#f4f9fd" stroke="#a98c4f"/>
<rect x="1" y="3" width="10.5" height="2.6" fill="#3d78bf"/><rect x="2" y="4" width="8" height="1" fill="#9cc4ee"/>
<path d="M13.5,8 Q13.5,13.5 6,14.5" fill="none" stroke="#f6d25c" stroke-width="1.4"/>
<path d="M12.5,0.8 L13.6,3 L15.8,4 L13.6,5 L12.5,7.2 L11.4,5 L9.2,4 L11.4,3 Z" fill="#fff3b0" stroke="#c99a1e" stroke-width=".9"/></svg>
<svg style="left:806px;top:675px" width="16" height="16" viewBox="0 0 16 16"><path d="M0.6,15.4 L1.2,11 L5.6,14.8 Z" fill="#fffbe0" stroke="#e8b43a" stroke-width=".8"/>
<path d="M1.2,11 L4.6,6.6 L9.2,10.4 L5.6,14.8 Z" fill="#fff4c4" stroke="#d99a2a" stroke-width=".8"/>
<path d="M4.6,6.6 L6.8,4 L11.4,7.8 L9.2,10.4 Z" fill="#9b9496" stroke="#7d7577" stroke-width=".8"/>
<path d="M6.8,4 L10.6,0.6 L15.4,0.8 L15.6,4 L11.4,7.8 Z" fill="#f7cf6e" stroke="#c98a1e" stroke-width=".8"/>
<circle cx="12.4" cy="3.2" r=".9" fill="#2b5ea8"/></svg>
<svg style="left:1291px;top:675px" width="16" height="16" viewBox="0 0 16 16"><path d="M5,1.2 H10 V7.6 H13.4 L7.5,14.4 L1.6,7.6 H5 Z" fill="#fde9a0" stroke="#c88a12" stroke-width="1.1" stroke-linejoin="round"/></svg>
<svg style="left:1313px;top:675px" width="16" height="16" viewBox="0 0 16 16"><path d="M5,14.4 H10 V8 H13.4 L7.5,1.2 L1.6,8 H5 Z" fill="#fde9a0" stroke="#c88a12" stroke-width="1.1" stroke-linejoin="round"/></svg>
<svg style="left:1345px;top:675px" width="16" height="16" viewBox="0 0 16 16"><path d="M2,4.52 L4.52,2 L8,5.48 L11.48,2 L14,4.52 L10.52,8 L14,11.48 L11.48,14 L8,10.52 L4.52,14 L2,11.48 L5.48,8 Z" fill="#6a6a6a" stroke="#555555" stroke-width="0.8" stroke-linejoin="round"/></svg>
<svg style="left:1367px;top:675px" width="16" height="16" viewBox="0 0 16 16"><path d="M1,3.1 L3.1,1 L6,3.9 L8.9,1 L11,3.1 L8.1,6 L11,8.9 L8.9,11 L6,8.1 L3.1,11 L1,8.9 L3.9,6 Z" fill="#d8d8d8" stroke="#8a8a8a" stroke-width="0.8" stroke-linejoin="round"/><path d="M4.4,6.752000000000001 L6.752000000000001,4.4 L10,7.648 L13.248,4.4 L15.6,6.752000000000001 L12.352,10 L15.6,13.248 L13.248,15.6 L10,12.352 L6.752000000000001,15.6 L4.4,13.248 L7.648,10 Z" fill="#6a6a6a" stroke="#555555" stroke-width="0.8" stroke-linejoin="round"/></svg>
<svg style="left:1399px;top:675px" width="16" height="16" viewBox="0 0 16 16"><rect x="1.5" y="1.5" width="10" height="10" fill="#f4f8fd" stroke="#8aa7d6"/><rect x="4.5" y="4.5" width="10" height="10" fill="#f4f8fd" stroke="#2f5aa8"/><path d="M6.5,9.5 H12.5" stroke="#2f5aa8" stroke-width="1.3"/><path d="M9.5,6.5 V12.5" stroke="#2f5aa8" stroke-width="1.3"/></svg>
<svg style="left:1422px;top:675px" width="16" height="16" viewBox="0 0 16 16"><rect x="1.5" y="1.5" width="10" height="10" fill="#f4f8fd" stroke="#8aa7d6"/><rect x="4.5" y="4.5" width="10" height="10" fill="#f4f8fd" stroke="#2f5aa8"/><path d="M6.5,9.5 H12.5" stroke="#2f5aa8" stroke-width="1.3"/></svg>
<svg style="left:1452px;top:675px" width="16" height="16" viewBox="0 0 16 16"><path d="M2.6,8.4 A5.4,5.4 0 0 1 11.6,4.6" fill="none" stroke="#b98512" stroke-width="3.6"/>
<path d="M9.4,2.2 L15,1.6 L13.8,7.4 Z" fill="#fbd96a" stroke="#b98512" stroke-width=".9" stroke-linejoin="round"/>
<path d="M2.6,8.4 A5.4,5.4 0 0 1 11.8,4.4" fill="none" stroke="#fbd96a" stroke-width="1.9"/>
<path d="M13.4,7.6 A5.4,5.4 0 0 1 4.4,11.4" fill="none" stroke="#b98512" stroke-width="3.6"/>
<path d="M6.6,13.8 L1,14.4 L2.2,8.6 Z" fill="#fbd96a" stroke="#b98512" stroke-width=".9" stroke-linejoin="round"/>
<path d="M13.4,7.6 A5.4,5.4 0 0 1 4.2,11.6" fill="none" stroke="#fbd96a" stroke-width="1.9"/></svg>
<svg style="left:1476px;top:675px" width="16" height="16" viewBox="0 0 16 16"><rect x="3.5" y="3.5" width="9.6" height="9.6" fill="#d2bcc0" stroke="#dcd2d4" stroke-width="1.2"/></svg>
<svg style="left:1499px;top:675px" width="16" height="16" viewBox="0 0 16 16"><path d="M1.5,0.5 H7.5 L9.5,2.5 V9.5 H1.5 Z" fill="#fbfcfe" stroke="#a98c4f"/>
<path d="M3,3 H7 M3,5 H8 M3,7 H6" stroke="#6d92d4" stroke-width="1"/>
<g transform="translate(2.6,3.2) scale(.82)"><path d="M0.6,15.4 L1.2,11 L5.6,14.8 Z" fill="#fffbe0" stroke="#e8b43a" stroke-width=".8"/>
<path d="M1.2,11 L4.6,6.6 L9.2,10.4 L5.6,14.8 Z" fill="#fff4c4" stroke="#d99a2a" stroke-width=".8"/>
<path d="M4.6,6.6 L6.8,4 L11.4,7.8 L9.2,10.4 Z" fill="#9b9496" stroke="#7d7577" stroke-width=".8"/>
<path d="M6.8,4 L10.6,0.6 L15.4,0.8 L15.6,4 L11.4,7.8 Z" fill="#f7cf6e" stroke="#c98a1e" stroke-width=".8"/>
<circle cx="12.4" cy="3.2" r=".9" fill="#2b5ea8"/></g></svg>
<svg style="left:1537px;top:675px" width="16" height="16" viewBox="0 0 16 16"><rect x="0.5" y="5.5" width="12" height="9" fill="#f8fbfe" stroke="#5f8fcf"/><rect x="0.5" y="5.5" width="12" height="2.4" fill="#3d78bf" stroke="#3d78bf"/>
<path d="M5.5,10.4 L9.4,6.4" stroke="#444" stroke-width="1.1"/>
<path d="M8.6,4.2 L12,7.6 L15.2,3.6 Q15.8,1.4 13.6,0.8 Q12.4,0.6 11.6,1.4 Z" fill="#3aa346" stroke="#1f7a2c" stroke-width=".8"/><circle cx="13" cy="2.6" r="1" fill="#8fd897"/></svg>
<svg style="left:828px;top:714px" width="16" height="16" viewBox="0 0 16 16"><circle cx="4" cy="4.4" r="3.4" fill="#3a9448"/><circle cx="3.2" cy="3.4" r="1.2" fill="#7fc48c"/>
<circle cx="12" cy="4" r="3.4" fill="#7a5cb4"/><circle cx="11.2" cy="3" r="1.2" fill="#b5a3dc"/>
<circle cx="7.8" cy="11" r="3.6" fill="#2f86d0"/><circle cx="7" cy="10" r="1.2" fill="#8cc4f0"/></svg>
<svg style="left:848px;top:733px" width="16" height="16" viewBox="0 0 16 16"><path d="M0.8,6 H5.6 V3.4 L10.6,8 L5.6,12.6 V10 H0.8 Z" fill="#fdeeb4" stroke="#b98512" stroke-width="1" stroke-linejoin="round"/></svg>
<svg style="left:848px;top:751px" width="16" height="16" viewBox="0 0 16 16"><path d="M0.8,6 H5.6 V3.4 L10.6,8 L5.6,12.6 V10 H0.8 Z" fill="#fdeeb4" stroke="#b98512" stroke-width="1" stroke-linejoin="round"/></svg>
<svg style="left:17px;top:874px" width="16" height="16" viewBox="0 0 16 16"><rect x="1.5" y="4.5" width="5" height="11" fill="#eef6fd" stroke="#a89668"/><rect x="1" y="4" width="6" height="2.6" fill="#3d78bf"/><rect x="2" y="5" width="4" height="1" fill="#8fbdee"/>
<path d="M11.4,1.8 L12.5,4.3 L14.8,5.4 L12.5,6.5 L11.4,9 L10.3,6.5 L8,5.4 L10.3,4.3 Z" fill="#fff8c8" stroke="#c99a1e" stroke-width="1"/></svg>
<span id="t1" class="t u" style="left:21.6px;top:3px;letter-spacing:0.062px;">Debug - quickdebug/Program1.cbl - Eclipse</span>
<span id="t2" class="t u" style="left:7.1px;top:24px;letter-spacing:-0.211px;">File</span>
<span id="t3" class="t u" style="left:38.6px;top:24px;letter-spacing:0.078px;">Edit</span>
<span id="t4" class="t u" style="left:72.6px;top:24px;letter-spacing:0.078px;">Navigate</span>
<span id="t5" class="t u" style="left:133.6px;top:24px;letter-spacing:-0.339px;">Search</span>
<span id="t6" class="t u" style="left:182.6px;top:24px;letter-spacing:0.092px;">Project</span>
<span id="t7" class="t u" style="left:233.6px;top:24px;letter-spacing:-0.005px;">Run</span>
<span id="t8" class="t u" style="left:268.6px;top:24px;letter-spacing:0.385px;">Window</span>
<span id="t9" class="t u" style="left:326.6px;top:24px;letter-spacing:0.328px;">Help</span>
<span id="t10" class="t u" style="left:1115.6px;top:52px;letter-spacing:0.125px;">Debug</span>
<span id="t11" class="t u" style="left:1181.6px;top:52px;letter-spacing:-0.803px;">COBOL</span>
<span id="t12" class="t u" style="left:26.6px;top:80px;letter-spacing:0.325px;">Debug</span>
<span id="t13" class="t u" style="left:124.6px;top:80px;letter-spacing:-0.335px;">Servers</span>
<span id="t14" class="t u" style="left:49.6px;top:102px;letter-spacing:-0.071px;">APquickdebug [COBOL Attach to Process]</span>
<span id="t15" class="t u" style="left:68.6px;top:120px;letter-spacing:-0.334px;">COBOL Debugger:%P005700ac (suspended)</span>
<span id="t16" class="t u" style="left:87.6px;top:138px;letter-spacing:-0.260px;">COBOL Thread:1 (suspended)</span>
<span id="t17" class="t u" style="left:109.6px;top:156px;letter-spacing:0.133px;">: No Debug Information</span>
<span id="t18" class="t u" style="left:87.6px;top:174px;letter-spacing:-0.260px;">COBOL Thread:2 (suspended)</span>
<span id="t19" class="t u" style="left:106.6px;top:192px;letter-spacing:-0.158px;">Program1 : main-010 (Line: 19)</span>
<span id="t20" class="t u" style="left:825.6px;top:80px;letter-spacing:-0.127px;">Variables</span>
<span id="t21" class="t u" style="left:900.6px;top:80px;letter-spacing:-0.034px;">Breakpoints</span>
<span id="t22" class="t u" style="left:27.6px;top:351px;letter-spacing:0.052px;">Program1.cbl</span>
<span id="t23" class="t u" style="left:58.6px;top:380px;letter-spacing:0.052px;">Program1.cbl</span>
<span id="t24" class="t m" style="left:49px;top:400px;">····•·*A·1·B··•····2····•····3·</span>
<span id="t25" class="t m" style="left:266px;top:400px;color:#fff;">·</span>
<span id="t26" class="t m" style="left:273px;top:400px;">··•····4····•····5····•··</span>
<span id="t27" class="t m ln" style="left:24px;top:418px;">10</span>
<span id="t28" class="t m k" style="left:99px;top:418px;">procedure division.</span>
<span id="t29" class="t m ln" style="left:24px;top:433px;">11</span>
<span id="t30" class="t m" style="left:99px;top:433px;">main </span>
<span id="t31" class="t m k" style="left:134px;top:433px;">section.</span>
<span id="t32" class="t m ln" style="left:24px;top:448px;">12</span>
<span id="t33" class="t m" style="left:99px;top:448px;">main-010.</span>
<span id="t34" class="t m ln" style="left:24px;top:463px;">13</span>
<span id="t35" class="t m k" style="left:127px;top:463px;">display </span>
<span id="t36" class="t m s" style="left:183px;top:463px;">&quot;started program 1&quot;</span>
<span id="t37" class="t m ln" style="left:24px;top:478px;">14</span>
<span id="t38" class="t m ln" style="left:24px;top:493px;">15</span>
<span id="t39" class="t m k" style="left:127px;top:493px;">move space to </span>
<span id="t40" class="t m" style="left:225px;top:493px;">ans</span>
<span id="t41" class="t m ln" style="left:24px;top:508px;">16</span>
<span id="t42" class="t m ln" style="left:24px;top:523px;">17</span>
<span id="t43" class="t m k" style="left:127px;top:523px;">perform until </span>
<span id="t44" class="t m" style="left:225px;top:523px;">ans =</span>
<span id="t45" class="t m s" style="left:260px;top:523px;">&quot;Q&quot;</span>
<span id="t46" class="t m ln" style="left:24px;top:538px;">18</span>
<span id="t47" class="t m k" style="left:155px;top:538px;">display </span>
<span id="t48" class="t m s" style="left:211px;top:538px;">&quot;press Q enter to exit...&quot;</span>
<span id="t49" class="t m ln" style="left:24px;top:553px;">19</span>
<span id="t50" class="t m k" style="left:155px;top:553px;">accept </span>
<span id="t51" class="t m" style="left:204px;top:553px;">ans</span>
<span id="t52" class="t m ln" style="left:24px;top:568px;">20</span>
<span id="t53" class="t m k" style="left:127px;top:568px;">end-perform</span>
<span id="t54" class="t m ln" style="left:24px;top:583px;">21</span>
<span id="t55" class="t m" style="left:127px;top:583px;">.</span>
<span id="t56" class="t m ln" style="left:24px;top:598px;">22</span>
<span id="t57" class="t m" style="left:99px;top:598px;">main-090.</span>
<span id="t58" class="t m ln" style="left:24px;top:613px;">23</span>
<span id="t59" class="t m k" style="left:127px;top:613px;">goback.</span>
<span id="t60" class="t m ln" style="left:24px;top:628px;">24</span>
<span id="t61" class="t u" style="left:483.6px;top:351px;letter-spacing:-0.398px;">Expressions</span>
<span id="t62" class="t u" style="left:468.6px;top:376px;letter-spacing:0.246px;">Name</span>
<span id="t63" class="t u" style="left:736.6px;top:376px;letter-spacing:0.037px;">Value</span>
<span id="t64" class="t u" style="left:505.6px;top:397px;letter-spacing:-0.041px;">&quot;ANS&quot;</span>
<span id="t65" class="t u" style="left:739.6px;top:397px;letter-spacing:-0.129px;color:#ff0000;">&lt;error(s)_during_the_evaluation&gt;</span>
<span id="t66" class="t u" style="left:505.6px;top:415px;letter-spacing:-0.227px;font-style:italic;">Add new expression</span>
<span id="t67" class="t u" style="left:1221.6px;top:351px;letter-spacing:0.281px;">Outline</span>
<span id="t68" class="t u" style="left:1243.6px;top:373px;letter-spacing:-0.086px;">Program1</span>
<span id="t69" class="t u" style="left:1262.6px;top:391px;letter-spacing:-0.131px;">Data Division</span>
<span id="t70" class="t u" style="left:1262.6px;top:409px;letter-spacing:-0.095px;">Procedure Division</span>
<span id="t71" class="t u" style="left:1281.6px;top:427px;letter-spacing:0.496px;">main</span>
<span id="t72" class="t u" style="left:1300.6px;top:445px;letter-spacing:-0.004px;">main-010</span>
<span id="t73" class="t u" style="left:1300.6px;top:463px;letter-spacing:-0.004px;">main-090</span>
<span id="t74" class="t u" style="left:27.6px;top:676px;letter-spacing:-0.004px;">Console</span>
<span id="t75" class="t u" style="left:133.6px;top:676px;letter-spacing:-0.338px;">Tasks</span>
<span id="t76" class="t u" style="left:190.6px;top:676px;letter-spacing:-0.086px;">Problems</span>
<span id="t77" class="t u" style="left:268.6px;top:676px;letter-spacing:-0.398px;">Executables</span>
<span id="t78" class="t u" style="left:6.6px;top:697px;letter-spacing:-0.211px;">Debug Messages Console : [APquickdebug] [Process ID: 5701804]</span>
<span id="t79" class="t m" style="left:10px;top:715px;">Loaded: [User Module]Program1- No symbols found in: Program1.idy- Symbols loaded from: /home1/support/support/</span>
<span id="t80" class="t u" style="left:825.6px;top:676px;letter-spacing:-0.505px;">Search</span>
<span id="t81" class="t u" style="left:809.6px;top:697px;letter-spacing:-0.129px;">Data (ans accept) - 3 matches</span>
<span id="t82" class="t u" style="left:847.6px;top:715px;letter-spacing:-0.133px;">ans, PIC X, Occurrences: 1, Size: 1, [Modification], Working-Storage 01/77-level</span>
<span id="t83" class="t u" style="left:865.6px;top:733px;letter-spacing:0.104px;">12:</span>
<span id="t84" class="t u" style="left:895px;top:733px;">&#x27;</span>
<span id="t85" class="t u" style="left:917.6px;top:733px;letter-spacing:0.238px;">main-010.&#x27; [ImpliedModification]</span>
<span id="t86" class="t u" style="left:865.6px;top:751px;letter-spacing:0.104px;">19:</span>
<span id="t87" class="t u" style="left:895px;top:751px;">&#x27;</span>
<span id="t88" class="t u" style="left:941.6px;top:751px;letter-spacing:0.178px;">accept ans&#x27; [Modification]</span>
</div>
</body></html>
